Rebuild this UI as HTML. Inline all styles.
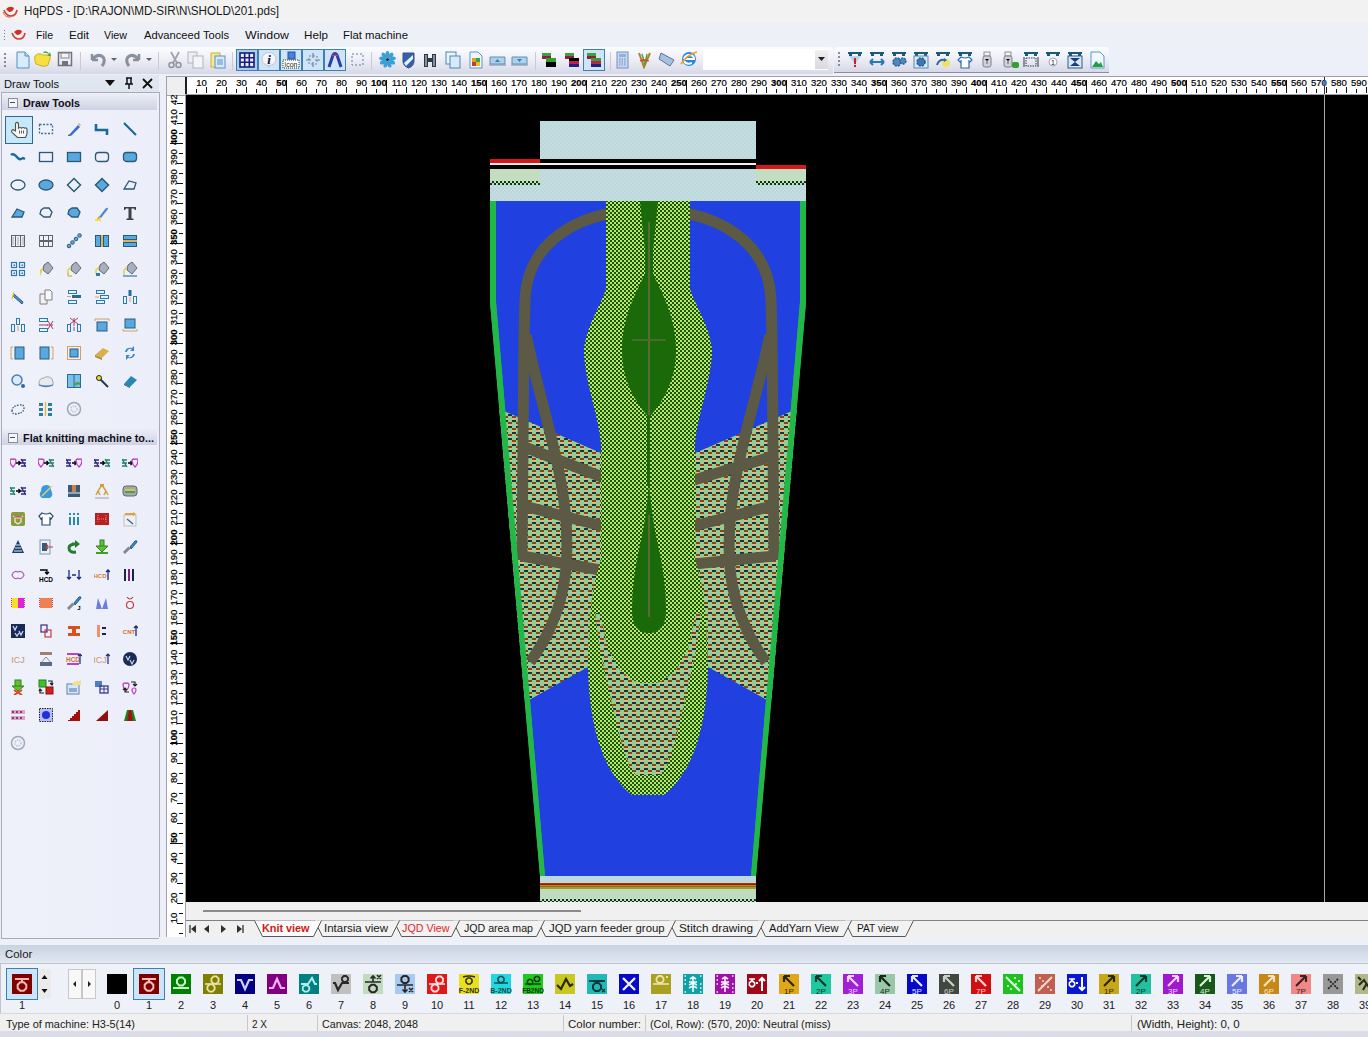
<!DOCTYPE html>
<html><head><meta charset="utf-8"><title>HqPDS</title>
<style>
html,body{margin:0;padding:0;}
body{width:1368px;height:1037px;overflow:hidden;position:relative;background:#eceef8;font-family:"Liberation Sans", sans-serif;}
</style></head><body>
<div style="position:absolute;left:0px;top:0px;width:1368px;height:22px;background:#f2f2f3;"></div>
<svg style="position:absolute;left:2px;top:4px" width="17" height="14" viewBox="0 0 17 14">
<path d="M2 6 Q4 12 9 12 Q14 12 15 6" fill="none" stroke="#d04030" stroke-width="1.6"/>
<path d="M4 5 Q8 1 12 4 Q11 8 7 8 Z" fill="#d03020"/>
<path d="M1 8 Q3 14 9 13" fill="none" stroke="#e06050" stroke-width="1"/></svg>
<div style="position:absolute;left:24px;top:5.14px;font-size:12px;line-height:13.404px;color:#1a1a1a;white-space:nowrap;transform:scaleX(0.9730);transform-origin:0 0;">HqPDS - [D:\RAJON\MD-SIR\N\SHOLD\201.pds]</div>
<div style="position:absolute;left:0px;top:22px;width:1368px;height:24px;background:#eef0f8;"></div>
<div style="position:absolute;left:4px;top:30px;width:1px;height:1px;background:#707080;"></div>
<div style="position:absolute;left:4px;top:33px;width:1px;height:1px;background:#707080;"></div>
<div style="position:absolute;left:4px;top:36px;width:1px;height:1px;background:#707080;"></div>
<div style="position:absolute;left:4px;top:39px;width:1px;height:1px;background:#707080;"></div>
<svg style="position:absolute;left:10px;top:27px" width="17" height="14" viewBox="0 0 17 14">
<path d="M2 6 Q4 12 9 12 Q14 12 15 6" fill="none" stroke="#d04030" stroke-width="1.6"/>
<path d="M4 5 Q8 1 12 4 Q11 8 7 8 Z" fill="#d03020"/></svg>
<div style="position:absolute;left:36px;top:29.05px;font-size:11px;line-height:12.287px;color:#101010;white-space:nowrap;transform:scaleX(0.9591);transform-origin:0 0;">File</div>
<div style="position:absolute;left:69px;top:29.05px;font-size:11px;line-height:12.287px;color:#101010;white-space:nowrap;transform:scaleX(1.0551);transform-origin:0 0;">Edit</div>
<div style="position:absolute;left:104px;top:29.05px;font-size:11px;line-height:12.287px;color:#101010;white-space:nowrap;transform:scaleX(0.9727);transform-origin:0 0;">View</div>
<div style="position:absolute;left:144px;top:29.05px;font-size:11px;line-height:12.287px;color:#101010;white-space:nowrap;transform:scaleX(1.0170);transform-origin:0 0;">Advanceed Tools</div>
<div style="position:absolute;left:245px;top:29.05px;font-size:11px;line-height:12.287px;color:#101010;white-space:nowrap;transform:scaleX(1.1246);transform-origin:0 0;">Window</div>
<div style="position:absolute;left:304px;top:29.05px;font-size:11px;line-height:12.287px;color:#101010;white-space:nowrap;transform:scaleX(1.0608);transform-origin:0 0;">Help</div>
<div style="position:absolute;left:343px;top:29.05px;font-size:11px;line-height:12.287px;color:#101010;white-space:nowrap;transform:scaleX(1.0322);transform-origin:0 0;">Flat machine</div>
<div style="position:absolute;left:0px;top:46px;width:1368px;height:30px;background:#eef0f9;"></div>
<div style="position:absolute;left:0px;top:47px;width:833px;height:27px;background:linear-gradient(#fbfcfe 0%,#f0f1f8 40%,#d6d8e6 100%);border-radius:0 3px 0 0;"></div>
<div style="position:absolute;left:0px;top:74px;width:833px;height:1px;background:#9a9cae;"></div>
<div style="position:absolute;left:834px;top:47px;width:275px;height:25px;background:linear-gradient(#fbfcfe 0%,#f0f1f8 40%,#d6d8e6 100%);border-radius:3px 3px 0 0;"></div>
<div style="position:absolute;left:834px;top:72px;width:275px;height:1px;background:#8a8c9e;"></div>
<div style="position:absolute;left:4px;top:53px;width:2px;height:2px;background:#8a8a98;"></div>
<div style="position:absolute;left:4px;top:57px;width:2px;height:2px;background:#8a8a98;"></div>
<div style="position:absolute;left:4px;top:61px;width:2px;height:2px;background:#8a8a98;"></div>
<div style="position:absolute;left:4px;top:65px;width:2px;height:2px;background:#8a8a98;"></div>
<div style="position:absolute;left:838px;top:52px;width:2px;height:2px;background:#8a8a98;"></div>
<div style="position:absolute;left:838px;top:56px;width:2px;height:2px;background:#8a8a98;"></div>
<div style="position:absolute;left:838px;top:60px;width:2px;height:2px;background:#8a8a98;"></div>
<div style="position:absolute;left:838px;top:64px;width:2px;height:2px;background:#8a8a98;"></div>
<svg style="position:absolute;left:15px;top:51px" width="16" height="18" viewBox="0 0 16 18"><path d="M2 1 H10 L14 5 V17 H2 Z" fill="#d8ecfb" stroke="#4f8fc8" stroke-width="1"/><path d="M10 1 V5 H14" fill="#b8d8f0" stroke="#4f8fc8"/></svg>
<svg style="position:absolute;left:34px;top:50px" width="18" height="18" viewBox="0 0 18 18"><path d="M1 6 Q3 3 7 4 L9 5 H15 Q17 6 16 9 L14 15 Q12 17 8 16 L2 14 Q0 10 1 6Z" fill="#f5e040" stroke="#c8b020"/><path d="M9 2 Q13 0 15 4 L16 2 L17 6 L13 6 L15 5 Q13 2 10 3Z" fill="#40a030"/></svg>
<svg style="position:absolute;left:57px;top:51px" width="16" height="16" viewBox="0 0 16 16"><rect x="1.5" y="1.5" width="13" height="13" fill="none" stroke="#707478" stroke-width="1.5"/><rect x="4" y="2" width="8" height="5" fill="none" stroke="#808488"/><rect x="5" y="10" width="6" height="4" fill="#707478"/></svg>
<div style="position:absolute;left:80px;top:52px;width:1px;height:18px;background:#c8cad6;"></div>
<svg style="position:absolute;left:89px;top:51px" width="18" height="18" viewBox="0 0 18 18"><path d="M3 9 L3 3 M3 9 L9 9" stroke="#8890a0" stroke-width="2.5" fill="none"/><path d="M4 8 Q9 2 14 6 Q17 10 13 15" stroke="#8890a0" stroke-width="3" fill="none"/></svg>
<svg style="position:absolute;left:111px;top:58px" width="6" height="4" viewBox="0 0 6 4"><path d="M0 0 H6 L3 3Z" fill="#606070"/></svg>
<svg style="position:absolute;left:124px;top:51px" width="18" height="18" viewBox="0 0 18 18"><path d="M15 9 L15 3 M15 9 L9 9" stroke="#8890a0" stroke-width="2.5" fill="none"/><path d="M14 8 Q9 2 4 6 Q1 10 5 15" stroke="#8890a0" stroke-width="3" fill="none"/></svg>
<svg style="position:absolute;left:146px;top:58px" width="6" height="4" viewBox="0 0 6 4"><path d="M0 0 H6 L3 3Z" fill="#606070"/></svg>
<div style="position:absolute;left:158px;top:52px;width:1px;height:18px;background:#c8cad6;"></div>
<svg style="position:absolute;left:167px;top:51px" width="16" height="18" viewBox="0 0 16 18"><path d="M4 1 L10 12 M12 1 L6 12" stroke="#a0a4b0" stroke-width="1.8"/><circle cx="4.5" cy="14" r="2.5" fill="none" stroke="#90949f" stroke-width="1.5"/><circle cx="11.5" cy="14" r="2.5" fill="none" stroke="#90949f" stroke-width="1.5"/></svg>
<svg style="position:absolute;left:187px;top:51px" width="17" height="18" viewBox="0 0 17 18"><rect x="1" y="1" width="9" height="11" fill="#eceef2" stroke="#b0b4bc"/><rect x="6" y="5" width="10" height="12" fill="#f4f5f8" stroke="#b0b4bc"/></svg>
<svg style="position:absolute;left:210px;top:51px" width="16" height="18" viewBox="0 0 16 18"><rect x="1" y="2" width="9" height="14" fill="#f8e890" stroke="#c8b050"/><rect x="5" y="5" width="10" height="12" fill="#d8eafa" stroke="#5890c8"/><path d="M7 9H13M7 11H13M7 13H13" stroke="#5890c8"/></svg>
<div style="position:absolute;left:232px;top:52px;width:1px;height:18px;background:#c8cad6;"></div>
<div style="position:absolute;left:236px;top:49px;width:20px;height:20px;background:#a9cdea;border:1px solid #3d80b2;"></div>
<svg style="position:absolute;left:239px;top:52px" width="16" height="16" viewBox="0 0 16 16"><rect x="1" y="1" width="14" height="14" fill="#e8eef8" stroke="#1a1a80" stroke-width="1.6"/><path d="M5.7 1V15M10.3 1V15M1 5.7H15M1 10.3H15" stroke="#1a1a80" stroke-width="1.6"/></svg>
<div style="position:absolute;left:258px;top:49px;width:20px;height:20px;background:#cfe4f6;border:1px solid #3d80b2;"></div>
<div style="position:absolute;left:280px;top:49px;width:20px;height:20px;background:#cfe4f6;border:1px solid #3d80b2;"></div>
<div style="position:absolute;left:302px;top:49px;width:20px;height:20px;background:#cfe4f6;border:1px solid #3d80b2;"></div>
<div style="position:absolute;left:324px;top:49px;width:20px;height:20px;background:#cfe4f6;border:1px solid #3d80b2;"></div>
<svg style="position:absolute;left:261px;top:51px" width="16" height="18" viewBox="0 0 16 18"><ellipse cx="8" cy="8" rx="7" ry="6.5" fill="#f4f6fa" stroke="#c0c8d8"/><text x="8" y="13" font-family="Liberation Serif" font-size="13" font-weight="bold" font-style="italic" text-anchor="middle" fill="#101040">i</text><path d="M6 14 L8 17 L9 14" fill="#c0c8d8"/></svg>
<svg style="position:absolute;left:282px;top:51px" width="18" height="18" viewBox="0 0 18 18"><rect x="6" y="1" width="7" height="7" fill="#4a80e0" stroke="#2050a0"/><rect x="1" y="9" width="16" height="8" fill="#fff" stroke="#303030" stroke-dasharray="1 1"/><text x="9" y="16" font-family="Liberation Sans" font-size="7" text-anchor="middle" fill="#202020">icon</text></svg>
<svg style="position:absolute;left:305px;top:52px" width="16" height="16" viewBox="0 0 16 16"><path d="M8 1V6M8 10V15M1 8H6M10 8H15" stroke="#7080a0" stroke-width="1.2"/><rect x="4" y="4" width="8" height="8" fill="none" stroke="#7080a0" stroke-dasharray="2 2"/></svg>
<svg style="position:absolute;left:327px;top:51px" width="16" height="18" viewBox="0 0 16 18"><path d="M2 16 L6 4 Q8 1 10 4 L14 16" stroke="#2a3ea8" stroke-width="3" fill="none"/><path d="M5 5 Q8 3 11 5" stroke="#b04080" stroke-width="1.5" fill="none"/></svg>
<svg style="position:absolute;left:351px;top:53px" width="13" height="13" viewBox="0 0 13 13"><rect x="1" y="1" width="11" height="11" fill="none" stroke="#6080a0" stroke-dasharray="2 2"/></svg>
<div style="position:absolute;left:371px;top:52px;width:1px;height:18px;background:#c8cad6;"></div>
<svg style="position:absolute;left:379px;top:51px" width="17" height="17" viewBox="0 0 17 17"><ellipse cx="8.5" cy="3.5" rx="2" ry="3.5" fill="#3aa0d8" transform="rotate(0 8.5 8.5)"/><ellipse cx="8.5" cy="3.5" rx="2" ry="3.5" fill="#3aa0d8" transform="rotate(40 8.5 8.5)"/><ellipse cx="8.5" cy="3.5" rx="2" ry="3.5" fill="#3aa0d8" transform="rotate(80 8.5 8.5)"/><ellipse cx="8.5" cy="3.5" rx="2" ry="3.5" fill="#3aa0d8" transform="rotate(120 8.5 8.5)"/><ellipse cx="8.5" cy="3.5" rx="2" ry="3.5" fill="#3aa0d8" transform="rotate(160 8.5 8.5)"/><ellipse cx="8.5" cy="3.5" rx="2" ry="3.5" fill="#3aa0d8" transform="rotate(200 8.5 8.5)"/><ellipse cx="8.5" cy="3.5" rx="2" ry="3.5" fill="#3aa0d8" transform="rotate(240 8.5 8.5)"/><ellipse cx="8.5" cy="3.5" rx="2" ry="3.5" fill="#3aa0d8" transform="rotate(280 8.5 8.5)"/><ellipse cx="8.5" cy="3.5" rx="2" ry="3.5" fill="#3aa0d8" transform="rotate(320 8.5 8.5)"/><circle cx="8.5" cy="8.5" r="1.6" fill="#203040"/></svg>
<svg style="position:absolute;left:401px;top:51px" width="15" height="18" viewBox="0 0 15 18"><path d="M2 2 H13 V10 Q13 15 7.5 17 Q2 15 2 10Z" fill="#3060b0" stroke="#405070"/><path d="M3 12 L12 4 V8 L5 15Z" fill="#e8f0f8"/></svg>
<svg style="position:absolute;left:423px;top:52px" width="14" height="16" viewBox="0 0 14 16"><path d="M1 2H5V6H9V2H13V15H9V10H5V15H1Z" fill="#303840"/><rect x="2" y="3" width="2" height="11" fill="#8090a0"/><rect x="10" y="3" width="2" height="11" fill="#8090a0"/></svg>
<svg style="position:absolute;left:445px;top:51px" width="16" height="18" viewBox="0 0 16 18"><rect x="1" y="1" width="10" height="12" fill="#eaf4fb" stroke="#4a88b8"/><rect x="5" y="5" width="10" height="12" fill="#d8eaf8" stroke="#4a88b8"/></svg>
<svg style="position:absolute;left:468px;top:51px" width="16" height="18" viewBox="0 0 16 18"><path d="M2 1H10L14 5V17H2Z" fill="#eef6fc" stroke="#5a98c8"/><rect x="4" y="7" width="4" height="4" fill="#e0a020"/><rect x="8" y="7" width="4" height="4" fill="#40a040"/><rect x="4" y="11" width="4" height="4" fill="#c04030"/><rect x="8" y="11" width="4" height="4" fill="#e0c030"/></svg>
<svg style="position:absolute;left:489px;top:53px" width="17" height="14" viewBox="0 0 17 14"><path d="M1 4 H16 V11 H1Z" fill="#b0d0e8" stroke="#5a90b8"/><path d="M0 12H17" stroke="#7090a8"/><path d="M8.5 6 L6 9 H11Z" fill="#3080c0"/></svg>
<svg style="position:absolute;left:511px;top:53px" width="17" height="14" viewBox="0 0 17 14"><path d="M1 4 H16 V11 H1Z" fill="#b0d0e8" stroke="#5a90b8"/><path d="M0 12H17" stroke="#7090a8"/><path d="M8.5 9 L6 6 H11Z" fill="#3080c0"/></svg>
<div style="position:absolute;left:535px;top:52px;width:1px;height:18px;background:#c8cad6;"></div>
<svg style="position:absolute;left:541px;top:52px" width="16" height="16" viewBox="0 0 16 16"><rect x="1" y="1" width="9" height="3" fill="#40a040"/><rect x="1" y="4" width="9" height="3" fill="#8a2040"/><rect x="5" y="6" width="10" height="4" fill="#30a030"/><rect x="5" y="10" width="10" height="5" fill="#000"/></svg>
<svg style="position:absolute;left:564px;top:52px" width="16" height="16" viewBox="0 0 16 16"><rect x="1" y="1" width="9" height="3" fill="#40a040"/><rect x="1" y="4" width="9" height="3" fill="#8a2040"/><rect x="5" y="6" width="10" height="3" fill="#000"/><rect x="5" y="9" width="10" height="3" fill="#c02050"/><rect x="5" y="12" width="10" height="3" fill="#202080"/></svg>
<div style="position:absolute;left:583px;top:49px;width:20px;height:20px;background:#cfe4f6;border:1px solid #3d80b2;"></div>
<svg style="position:absolute;left:586px;top:52px" width="16" height="16" viewBox="0 0 16 16"><rect x="1" y="1" width="9" height="3" fill="#40a040"/><rect x="1" y="4" width="9" height="3" fill="#8a2040"/><rect x="5" y="6" width="10" height="3" fill="#30a030"/><rect x="5" y="9" width="10" height="3" fill="#c02050"/><rect x="5" y="12" width="10" height="3" fill="#202080"/></svg>
<div style="position:absolute;left:610px;top:52px;width:1px;height:18px;background:#c8cad6;"></div>
<svg style="position:absolute;left:616px;top:51px" width="13" height="18" viewBox="0 0 13 18"><rect x="1" y="1" width="11" height="16" fill="#c8d8f0" stroke="#7090c0"/><rect x="3" y="3" width="7" height="3" fill="#90b0e0"/><path d="M3 8H10M3 10H10M3 12H10M3 14H10" stroke="#7090c0" stroke-dasharray="1.5 1"/></svg>
<svg style="position:absolute;left:637px;top:51px" width="15" height="18" viewBox="0 0 15 18"><path d="M2 2 L7 16 L13 2" stroke="#b08030" stroke-width="2" fill="none"/><path d="M5 3 L8 14 L10 3" stroke="#60a040" stroke-width="1.5" fill="none"/><path d="M3 10 Q7 8 12 10" stroke="#d04040" stroke-width="1.3" fill="none"/></svg>
<svg style="position:absolute;left:658px;top:52px" width="17" height="15" viewBox="0 0 17 15"><path d="M3 1 L16 8 L12 14 L1 7Z" fill="#a8c0dc" stroke="#5878a0"/></svg>
<svg style="position:absolute;left:680px;top:50px" width="18" height="18" viewBox="0 0 18 18"><circle cx="9" cy="9" r="7" fill="#2a88d8"/><path d="M4 9H14 Q14 5 9 5 Q5 5 4 9M4 11 Q6 15 12 13" stroke="#fff" stroke-width="2" fill="none"/><path d="M1 14 Q8 4 17 2" stroke="#f0a020" stroke-width="1.6" fill="none"/></svg>
<div style="position:absolute;left:703px;top:49px;width:125px;height:21px;background:#fff;"></div>
<div style="position:absolute;left:815px;top:50px;width:13px;height:19px;background:linear-gradient(#f0f0f0,#d8d8de);"></div>
<svg style="position:absolute;left:818px;top:57px" width="7" height="4" viewBox="0 0 7 4"><path d="M0 0H7L3.5 4Z" fill="#202020"/></svg>
<svg style="position:absolute;left:847px;top:51px" width="16" height="18" viewBox="0 0 16 18"><path d="M1 2H15" stroke="#1a5a78" stroke-width="2"/><rect x="2" y="2" width="3" height="3" fill="#1a5a78"/><rect x="11" y="2" width="3" height="3" fill="#1a5a78"/><path d="M2 5 L14 5 L9 12 V16 H7 V12Z" fill="#bcd4e8"/><rect x="7" y="7" width="2" height="6" fill="#d02020"/><rect x="7" y="14" width="2" height="2" fill="#d02020"/></svg>
<svg style="position:absolute;left:869px;top:51px" width="16" height="18" viewBox="0 0 16 18"><path d="M1 2H15" stroke="#1a5a78" stroke-width="2"/><rect x="2" y="2" width="3" height="3" fill="#1a5a78"/><rect x="11" y="2" width="3" height="3" fill="#1a5a78"/><path d="M1 11H15M1 11 L4 8M1 11 L4 14M15 11 L12 8M15 11 L12 14" stroke="#2a78b8" stroke-width="2" fill="none"/></svg>
<svg style="position:absolute;left:891px;top:51px" width="17" height="18" viewBox="0 0 17 18"><path d="M1 2H15" stroke="#1a5a78" stroke-width="2"/><rect x="2" y="2" width="3" height="3" fill="#1a5a78"/><rect x="11" y="2" width="3" height="3" fill="#1a5a78"/><circle cx="6" cy="11" r="4" fill="#4a88c0" stroke="#2a5a90" stroke-dasharray="2 1.2" stroke-width="1.5"/><circle cx="12" cy="10" r="3" fill="#4a88c0" stroke="#2a5a90" stroke-dasharray="2 1" stroke-width="1.3"/></svg>
<svg style="position:absolute;left:913px;top:51px" width="16" height="18" viewBox="0 0 16 18"><path d="M1 2H15" stroke="#1a5a78" stroke-width="2"/><rect x="2" y="2" width="3" height="3" fill="#1a5a78"/><rect x="11" y="2" width="3" height="3" fill="#1a5a78"/><rect x="1" y="5" width="14" height="12" fill="#d8e8f4" stroke="#5a88b0"/><circle cx="8" cy="11" r="4" fill="#3a78b8" stroke="#2a5890" stroke-dasharray="2 1.2" stroke-width="1.5"/></svg>
<svg style="position:absolute;left:935px;top:51px" width="16" height="18" viewBox="0 0 16 18"><path d="M1 2H15" stroke="#1a5a78" stroke-width="2"/><rect x="2" y="2" width="3" height="3" fill="#1a5a78"/><rect x="11" y="2" width="3" height="3" fill="#1a5a78"/><circle cx="11" cy="12" r="4" fill="#f0e060"/><path d="M2 14 Q4 8 10 9" stroke="#2a6aa8" stroke-width="2" fill="none"/><path d="M9 7 L12 9 L9 11Z" fill="#2a6aa8"/></svg>
<svg style="position:absolute;left:957px;top:51px" width="16" height="18" viewBox="0 0 16 18"><path d="M1 2H15" stroke="#1a5a78" stroke-width="2"/><rect x="2" y="2" width="3" height="3" fill="#1a5a78"/><rect x="11" y="2" width="3" height="3" fill="#1a5a78"/><path d="M4 6 L1 9 L3 11 L4 10 V17 H12 V10 L13 11 L15 9 L12 6 Q8 8 4 6Z" fill="#fff" stroke="#2a6aa8" stroke-width="1.2"/></svg>
<svg style="position:absolute;left:982px;top:51px" width="10" height="18" viewBox="0 0 10 18"><rect x="2" y="1" width="6" height="4" fill="none" stroke="#909090"/><rect x="1" y="5" width="8" height="11" rx="2" fill="#d0d0d8" stroke="#808088"/><path d="M3 8 L5 10 L7 8M5 10V13" stroke="#606068"/></svg>
<svg style="position:absolute;left:1003px;top:51px" width="17" height="18" viewBox="0 0 17 18"><rect x="2" y="1" width="6" height="4" fill="none" stroke="#909090"/><rect x="1" y="5" width="8" height="11" rx="2" fill="#d0d0d8" stroke="#808088"/><path d="M3 8 L5 10 L7 8M5 10V13" stroke="#606068"/><rect x="9" y="11" width="7" height="6" rx="2" fill="#30a030"/></svg>
<svg style="position:absolute;left:1023px;top:51px" width="16" height="18" viewBox="0 0 16 18"><path d="M1 2H15" stroke="#1a5a78" stroke-width="2"/><rect x="2" y="2" width="3" height="3" fill="#1a5a78"/><rect x="11" y="2" width="3" height="3" fill="#1a5a78"/><rect x="3" y="7" width="10" height="8" fill="none" stroke="#303848" stroke-dasharray="1.5 1"/><path d="M1 6V16M15 6V16" stroke="#303848"/></svg>
<svg style="position:absolute;left:1045px;top:51px" width="16" height="18" viewBox="0 0 16 18"><path d="M1 2H15" stroke="#1a5a78" stroke-width="2"/><rect x="2" y="2" width="3" height="3" fill="#1a5a78"/><rect x="11" y="2" width="3" height="3" fill="#1a5a78"/><circle cx="8" cy="11" r="4" fill="#fff" stroke="#a0a8b0"/><text x="8" y="14" font-size="7" text-anchor="middle" fill="#202020" font-family="Liberation Sans">1</text></svg>
<svg style="position:absolute;left:1067px;top:51px" width="16" height="18" viewBox="0 0 16 18"><path d="M1 2H15" stroke="#1a5a78" stroke-width="2"/><rect x="2" y="2" width="3" height="3" fill="#1a5a78"/><rect x="11" y="2" width="3" height="3" fill="#1a5a78"/><rect x="1" y="5" width="14" height="12" fill="#d8e8f4" stroke="#2a5a88"/><path d="M3 7H13L8 11L13 15H3L8 11Z" fill="#1a3a78"/></svg>
<svg style="position:absolute;left:1090px;top:51px" width="15" height="18" viewBox="0 0 15 18"><path d="M1 1H10L14 5V17H1Z" fill="#f0f8fc" stroke="#5a98c8"/><path d="M2 16 L6 10 L9 13 L11 11 L13 16Z" fill="#20a040"/></svg>
<div style="position:absolute;left:0px;top:74px;width:166px;height:864px;background:#eceef8;"></div>
<div style="position:absolute;left:0px;top:75px;width:159px;height:17px;background:linear-gradient(#e2e8f2,#dfe5ef);"></div>
<div style="position:absolute;left:4px;top:78.05px;font-size:11px;line-height:12.287px;color:#101010;white-space:nowrap;transform:scaleX(1.0146);transform-origin:0 0;">Draw Tools</div>
<svg style="position:absolute;left:105px;top:80px" width="10" height="7" viewBox="0 0 10 7"><path d="M0 0H10L5 6Z" fill="#101010"/></svg>
<svg style="position:absolute;left:124px;top:77px" width="10" height="12" viewBox="0 0 10 12"><path d="M2 1H8M3 1V7M7 1V7M1 7H9M5 7V12" stroke="#101010" stroke-width="1.5" fill="none"/></svg>
<svg style="position:absolute;left:142px;top:78px" width="11" height="11" viewBox="0 0 11 11"><path d="M1 1L10 10M10 1L1 10" stroke="#101010" stroke-width="1.8"/></svg>
<div style="position:absolute;left:1px;top:92px;width:157px;height:845px;background:linear-gradient(90deg,#eef0fa,#eceff9);border:1px solid #a8aab8;"></div>
<div style="position:absolute;left:2px;top:94px;width:155px;height:16px;background:linear-gradient(#ecedf6,#cfd2e4);"></div>
<div style="position:absolute;left:8px;top:98px;width:8px;height:8px;background:#f6f6fa;border:1px solid #8a8ca0;"></div>
<div style="position:absolute;left:10px;top:102px;width:5px;height:1px;background:#505060;"></div>
<div style="position:absolute;left:23px;top:96.64px;font-size:11px;line-height:12.287px;color:#101018;font-weight:bold;white-space:nowrap;transform:scaleX(0.9749);transform-origin:0 0;">Draw Tools</div>
<div style="position:absolute;left:2px;top:429px;width:155px;height:16px;background:linear-gradient(#ecedf6,#cfd2e4);"></div>
<div style="position:absolute;left:8px;top:433px;width:8px;height:8px;background:#f6f6fa;border:1px solid #8a8ca0;"></div>
<div style="position:absolute;left:10px;top:437px;width:5px;height:1px;background:#505060;"></div>
<div style="position:absolute;left:23px;top:431.65px;font-size:11px;line-height:12.287px;color:#101018;font-weight:bold;white-space:nowrap;transform:scaleX(0.9878);transform-origin:0 0;">Flat knitting machine to...</div>
<div style="position:absolute;left:5px;top:116px;width:28px;height:28px;background:#c6e8fa;border:1.5px solid #2f6a8a;box-sizing:border-box;"></div>
<svg style="position:absolute;left:10px;top:121px" width="16" height="16" viewBox="0 0 16 16"></svg>
<svg style="position:absolute;left:38px;top:121px" width="16" height="16" viewBox="0 0 16 16"><rect x="1.5" y="3.5" width="13" height="9" fill="none" stroke="#3a7090" stroke-dasharray="2 1.5" stroke-width="1.3"/></svg>
<svg style="position:absolute;left:66px;top:121px" width="16" height="16" viewBox="0 0 16 16"><path d="M3 14 L12 4 L14 6 L5 15Z" fill="#3a6ad0"/><path d="M12 3 L13 2 L15 4 L14 5Z" fill="#e8b040"/><path d="M2 15 L3 13 L4 15Z" fill="#404040"/></svg>
<svg style="position:absolute;left:94px;top:121px" width="16" height="16" viewBox="0 0 16 16"><path d="M2 3 V9 H13 V14" stroke="#1a6a98" stroke-width="2.6" fill="none"/></svg>
<svg style="position:absolute;left:122px;top:121px" width="16" height="16" viewBox="0 0 16 16"><path d="M2 2 L14 14" stroke="#1a6a98" stroke-width="2.2"/></svg>
<svg style="position:absolute;left:10px;top:149px" width="16" height="16" viewBox="0 0 16 16"><path d="M1 6 Q3 4 6 7 Q9 11 11 10 L13 9 L15 10" stroke="#1a6a98" stroke-width="2.4" fill="none"/></svg>
<svg style="position:absolute;left:38px;top:149px" width="16" height="16" viewBox="0 0 16 16"><rect x="1.5" y="3.5" width="13" height="9" fill="none" stroke="#2a5a78" stroke-width="1.3"/></svg>
<svg style="position:absolute;left:66px;top:149px" width="16" height="16" viewBox="0 0 16 16"><rect x="1.5" y="3.5" width="13" height="9" fill="#5aa8e0" stroke="#2a5a78" stroke-width="1.3"/></svg>
<svg style="position:absolute;left:94px;top:149px" width="16" height="16" viewBox="0 0 16 16"><rect x="1.5" y="3.5" width="13" height="9" rx="3" fill="none" stroke="#2a5a78" stroke-width="1.3"/></svg>
<svg style="position:absolute;left:122px;top:149px" width="16" height="16" viewBox="0 0 16 16"><rect x="1.5" y="3.5" width="13" height="9" rx="3" fill="#5aa8e0" stroke="#2a5a78" stroke-width="1.3"/></svg>
<svg style="position:absolute;left:10px;top:177px" width="16" height="16" viewBox="0 0 16 16"><ellipse cx="8" cy="8" rx="7" ry="5" fill="none" stroke="#2a5a78" stroke-width="1.3"/></svg>
<svg style="position:absolute;left:38px;top:177px" width="16" height="16" viewBox="0 0 16 16"><ellipse cx="8" cy="8" rx="7" ry="5" fill="#5aa8e0" stroke="#2a5a78" stroke-width="1.3"/></svg>
<svg style="position:absolute;left:66px;top:177px" width="16" height="16" viewBox="0 0 16 16"><path d="M8 1.5 L14.5 8 L8 14.5 L1.5 8Z" fill="none" stroke="#2a5a78" stroke-width="1.5"/></svg>
<svg style="position:absolute;left:94px;top:177px" width="16" height="16" viewBox="0 0 16 16"><path d="M8 1.5 L14.5 8 L8 14.5 L1.5 8Z" fill="#5aa8e0" stroke="#2a5a78" stroke-width="1.5"/></svg>
<svg style="position:absolute;left:122px;top:177px" width="16" height="16" viewBox="0 0 16 16"><path d="M2 12 L7 4 L14 6 L12 12Z" fill="none" stroke="#2a5a78" stroke-width="1.3"/></svg>
<svg style="position:absolute;left:10px;top:205px" width="16" height="16" viewBox="0 0 16 16"><path d="M2 12 L7 4 L14 7 L12 12Z" fill="#5aa8e0" stroke="#2a5a78" stroke-width="1.3"/></svg>
<svg style="position:absolute;left:38px;top:205px" width="16" height="16" viewBox="0 0 16 16"><path d="M3 5 L6 3 H11 L14 7 L12 12 H6 L2 9Z" fill="none" stroke="#2a5a78" stroke-width="1.3"/></svg>
<svg style="position:absolute;left:66px;top:205px" width="16" height="16" viewBox="0 0 16 16"><path d="M3 5 L6 3 H11 L14 7 L12 12 H6 L2 9Z" fill="#5aa8e0" stroke="#2a5a78" stroke-width="1.3"/></svg>
<svg style="position:absolute;left:94px;top:205px" width="16" height="16" viewBox="0 0 16 16"><path d="M5 12 L12 3 Q14 2 14 4 L7 13Z" fill="#4a88d0"/><path d="M2 15 L5 11 L7 13Z" fill="#e8a040"/><rect x="1" y="14" width="6" height="2" fill="#f0e040"/></svg>
<svg style="position:absolute;left:122px;top:205px" width="16" height="16" viewBox="0 0 16 16"><path d="M2 2H14V5H13L12 3.5H9.5V13.5H11.5V15H4.5V13.5H6.5V3.5H4L3 5H2Z" fill="#404048"/></svg>
<svg style="position:absolute;left:10px;top:233px" width="16" height="16" viewBox="0 0 16 16"><rect x="1.5" y="2.5" width="13" height="11" fill="none" stroke="#606468"/><path d="M5.5 3V13M10.5 3V13" stroke="#606468"/><path d="M3 4V12M8 4V12M13 4V12" stroke="#a0a4a8"/></svg>
<svg style="position:absolute;left:38px;top:233px" width="16" height="16" viewBox="0 0 16 16"><rect x="1.5" y="2.5" width="13" height="5" fill="none" stroke="#606468"/><rect x="1.5" y="8.5" width="13" height="5" fill="none" stroke="#606468"/><path d="M5.5 3V13M10.5 3V13" stroke="#606468"/></svg>
<svg style="position:absolute;left:66px;top:233px" width="16" height="16" viewBox="0 0 16 16"><circle cx="3" cy="13" r="1.8" fill="#5aa8e0" stroke="#2a5a78"/><circle cx="6.5" cy="9.5" r="1.8" fill="#5aa8e0" stroke="#2a5a78"/><circle cx="10" cy="6" r="1.8" fill="#5aa8e0" stroke="#2a5a78"/><circle cx="13.5" cy="2.5" r="1.8" fill="#5aa8e0" stroke="#2a5a78"/></svg>
<svg style="position:absolute;left:94px;top:233px" width="16" height="16" viewBox="0 0 16 16"><rect x="1.5" y="2.5" width="5" height="11" fill="#5aa8e0" stroke="#2a5a78"/><rect x="9.5" y="2.5" width="5" height="11" fill="#5aa8e0" stroke="#2a5a78"/><path d="M8 2V14" stroke="#d0a030" stroke-width="1.5"/></svg>
<svg style="position:absolute;left:122px;top:233px" width="16" height="16" viewBox="0 0 16 16"><rect x="1.5" y="2.5" width="13" height="4" fill="#5aa8e0" stroke="#2a5a78"/><rect x="1.5" y="9.5" width="13" height="4" fill="#5aa8e0" stroke="#2a5a78"/><path d="M1 8H15" stroke="#d0a030" stroke-width="1.5"/></svg>
<svg style="position:absolute;left:10px;top:261px" width="16" height="16" viewBox="0 0 16 16"><rect x="1.5" y="1.5" width="5" height="5" fill="none" stroke="#2a7ab0" stroke-width="1.2"/><rect x="9.5" y="1.5" width="5" height="5" fill="none" stroke="#2a7ab0" stroke-width="1.2"/><rect x="1.5" y="9.5" width="5" height="5" fill="none" stroke="#2a7ab0" stroke-width="1.2"/><rect x="9.5" y="9.5" width="5" height="5" fill="none" stroke="#2a7ab0" stroke-width="1.2"/><rect x="3.5" y="3.5" width="1.5" height="1.5" fill="#2a7ab0"/><rect x="11.5" y="3.5" width="1.5" height="1.5" fill="#2a7ab0"/><rect x="3.5" y="11.5" width="1.5" height="1.5" fill="#2a7ab0"/><rect x="11.5" y="11.5" width="1.5" height="1.5" fill="#2a7ab0"/></svg>
<svg style="position:absolute;left:38px;top:261px" width="16" height="16" viewBox="0 0 16 16"><path d="M6 4 L10 1 L15 7 L10 13 L5 9Z" fill="#a8b0c0" stroke="#606878"/><path d="M5 6 L2 9 V15 L4 11Z" fill="#e8d040"/></svg>
<svg style="position:absolute;left:66px;top:261px" width="16" height="16" viewBox="0 0 16 16"><path d="M6 4 L10 1 L15 7 L10 13 L5 9Z" fill="#a8b0c0" stroke="#606878"/><path d="M5 6 L2 9 V13" fill="none" stroke="#e8d040" stroke-width="1.5"/><path d="M2 12V15H6" stroke="#d0a030" fill="none"/></svg>
<svg style="position:absolute;left:94px;top:261px" width="16" height="16" viewBox="0 0 16 16"><path d="M6 4 L10 1 L15 7 L10 13 L5 9Z" fill="#a8b0c0" stroke="#606878"/><path d="M5 6 L2 9 V13" fill="none" stroke="#e8d040" stroke-width="1.5"/><rect x="2" y="12" width="4" height="3" fill="#2a7ab0"/></svg>
<svg style="position:absolute;left:122px;top:261px" width="16" height="16" viewBox="0 0 16 16"><path d="M6 4 L10 1 L15 7 L10 13 L5 9Z" fill="#a8b0c0" stroke="#606878"/><path d="M5 6 L2 9 V14" fill="none" stroke="#e8d040" stroke-width="1.5"/><path d="M1 15H15" stroke="#2a7ab0" stroke-width="1.2"/></svg>
<svg style="position:absolute;left:10px;top:289px" width="16" height="16" viewBox="0 0 16 16"><path d="M4 5 L13 13 L12 15 L3 7Z" fill="#4a90d0" stroke="#2a5a88"/><path d="M4 3 L2 10" stroke="#e8c040" stroke-width="1.3"/></svg>
<svg style="position:absolute;left:38px;top:289px" width="16" height="16" viewBox="0 0 16 16"><path d="M2 5H7L9 7V15H2Z" fill="#f0f0f0" stroke="#808080"/><path d="M7 1H12L14 3V11H7Z" fill="#f8f8f8" stroke="#808080"/></svg>
<svg style="position:absolute;left:66px;top:289px" width="16" height="16" viewBox="0 0 16 16"><rect x="2.5" y="1.5" width="8" height="3" fill="none" stroke="#2a7ab0"/><rect x="6" y="6" width="9" height="3" fill="#2a6a98"/><rect x="2.5" y="11.5" width="8" height="3" fill="none" stroke="#2a7ab0"/><path d="M1 7.5H5" stroke="#e0a060"/></svg>
<svg style="position:absolute;left:94px;top:289px" width="16" height="16" viewBox="0 0 16 16"><rect x="2.5" y="1.5" width="8" height="3" fill="none" stroke="#2a7ab0"/><rect x="6.5" y="6.5" width="8" height="3" fill="none" stroke="#2a7ab0"/><rect x="2.5" y="11.5" width="8" height="3" fill="none" stroke="#2a7ab0"/><path d="M1 8H5" stroke="#e0a060"/></svg>
<svg style="position:absolute;left:122px;top:289px" width="16" height="16" viewBox="0 0 16 16"><rect x="1.5" y="7.5" width="3" height="7" fill="none" stroke="#2a7ab0"/><rect x="6.5" y="1" width="3" height="6" fill="#2a6a98"/><rect x="11.5" y="7.5" width="3" height="7" fill="none" stroke="#2a7ab0"/><path d="M8 8V13" stroke="#e0a060"/></svg>
<svg style="position:absolute;left:10px;top:317px" width="16" height="16" viewBox="0 0 16 16"><rect x="1.5" y="7.5" width="3" height="7" fill="none" stroke="#2a7ab0"/><rect x="6.5" y="1.5" width="3" height="6" fill="none" stroke="#2a7ab0"/><rect x="11.5" y="7.5" width="3" height="7" fill="none" stroke="#2a7ab0"/><path d="M8 9V14" stroke="#e0a060"/></svg>
<svg style="position:absolute;left:38px;top:317px" width="16" height="16" viewBox="0 0 16 16"><rect x="1.5" y="1.5" width="8" height="3" fill="none" stroke="#2a7ab0"/><rect x="1.5" y="11.5" width="8" height="3" fill="none" stroke="#2a7ab0"/><path d="M1 8H10M10 4L15 12M15 4L10 12M9 8H15" stroke="#a04060"/></svg>
<svg style="position:absolute;left:66px;top:317px" width="16" height="16" viewBox="0 0 16 16"><rect x="1.5" y="7.5" width="3" height="7" fill="none" stroke="#2a7ab0"/><rect x="11.5" y="7.5" width="3" height="7" fill="none" stroke="#2a7ab0"/><path d="M8 1V9M4 1L12 7M12 1L4 7M8 10V14" stroke="#a04060"/></svg>
<svg style="position:absolute;left:94px;top:317px" width="16" height="16" viewBox="0 0 16 16"><path d="M1 4V2H15V4" stroke="#d0a060" fill="none"/><rect x="3" y="5" width="10" height="9" fill="#5aa8e0" stroke="#2a5a78"/></svg>
<svg style="position:absolute;left:122px;top:317px" width="16" height="16" viewBox="0 0 16 16"><rect x="3" y="2" width="10" height="9" fill="#5aa8e0" stroke="#2a5a78"/><path d="M1 12V14H15V12" stroke="#d0a060" fill="none"/></svg>
<svg style="position:absolute;left:10px;top:345px" width="16" height="16" viewBox="0 0 16 16"><path d="M3 2H1V14H3" stroke="#d0a060" fill="none"/><rect x="5" y="2" width="9" height="12" fill="#5aa8e0" stroke="#2a5a78"/></svg>
<svg style="position:absolute;left:38px;top:345px" width="16" height="16" viewBox="0 0 16 16"><rect x="2" y="2" width="9" height="12" fill="#5aa8e0" stroke="#2a5a78"/><path d="M13 2H15V14H13" stroke="#d0a060" fill="none"/></svg>
<svg style="position:absolute;left:66px;top:345px" width="16" height="16" viewBox="0 0 16 16"><rect x="1.5" y="1.5" width="13" height="13" fill="none" stroke="#d0a060"/><rect x="4" y="4" width="8" height="8" fill="#5aa8e0" stroke="#2a5a78"/></svg>
<svg style="position:absolute;left:94px;top:345px" width="16" height="16" viewBox="0 0 16 16"><path d="M1 10 L9 3 L15 6 L8 13Z" fill="#d8b050"/><path d="M1 10 L8 13 V15 L1 12Z" fill="#b08a30"/></svg>
<svg style="position:absolute;left:122px;top:345px" width="16" height="16" viewBox="0 0 16 16"><path d="M3 7 Q4 2 10 3 L12 1 V6 H8 L10 4 Q6 3 5 7Z" fill="#3a88c8"/><path d="M13 9 Q12 14 6 13 L4 15 V10 H8 L6 12 Q10 13 11 9Z" fill="#3a88c8"/></svg>
<svg style="position:absolute;left:10px;top:373px" width="16" height="16" viewBox="0 0 16 16"><circle cx="7" cy="7" r="5" fill="#d8ecf8" stroke="#4a80b0" stroke-width="1.5"/><circle cx="13" cy="13" r="2" fill="#2a6ab0"/></svg>
<svg style="position:absolute;left:38px;top:373px" width="16" height="16" viewBox="0 0 16 16"><path d="M1 11 Q1 5 6 5 Q8 3 11 4 Q15 5 15 9 V12 Q10 14 1 12Z" fill="#e8eaee" stroke="#a0a8b0"/><path d="M1 12 Q8 15 15 12" stroke="#4a80b0" stroke-width="1.3" fill="none"/></svg>
<svg style="position:absolute;left:66px;top:373px" width="16" height="16" viewBox="0 0 16 16"><rect x="1.5" y="1.5" width="13" height="13" fill="#7ac0e8" stroke="#2a6a98"/><path d="M8 1V15" stroke="#2a6a98"/><path d="M9 12 Q11 9 14 11" stroke="#50a040" stroke-width="2.5" fill="none"/></svg>
<svg style="position:absolute;left:94px;top:373px" width="16" height="16" viewBox="0 0 16 16"><path d="M6 6 L14 14" stroke="#1a3a60" stroke-width="2"/><circle cx="5" cy="5" r="2.5" fill="#f0e020" stroke="#202020"/></svg>
<svg style="position:absolute;left:122px;top:373px" width="16" height="16" viewBox="0 0 16 16"><path d="M2 11 L9 3 L15 7 L8 14Z" fill="#2a88b0"/><path d="M2 11 L8 14 V15 L2 12Z" fill="#1a5a78"/></svg>
<svg style="position:absolute;left:10px;top:401px" width="16" height="16" viewBox="0 0 16 16"><path d="M2 10 Q2 5 9 4 Q14 3 14 7 Q14 12 6 13 Q2 13 2 10Z" fill="none" stroke="#2a5a78" stroke-dasharray="1.5 1.2" stroke-width="1.3"/></svg>
<svg style="position:absolute;left:38px;top:401px" width="16" height="16" viewBox="0 0 16 16"><rect x="1" y="2" width="4" height="3" fill="#2a7ab0"/><rect x="1" y="7" width="4" height="3" fill="#2a7ab0"/><rect x="1" y="12" width="4" height="3" fill="#2a7ab0"/><rect x="10" y="2" width="4" height="3" fill="#2a7ab0"/><rect x="10" y="7" width="4" height="3" fill="#2a7ab0"/><rect x="10" y="12" width="4" height="3" fill="#2a7ab0"/><path d="M7.5 1V15" stroke="#e0c040" stroke-width="1.5"/></svg>
<svg style="position:absolute;left:66px;top:401px" width="16" height="16" viewBox="0 0 16 16"><circle cx="8" cy="8" r="6.5" fill="none" stroke="#a0a8b4" stroke-width="1.5"/><circle cx="8" cy="8" r="3" fill="none" stroke="#b8c8d8" stroke-width="1.5" stroke-dasharray="1.5 1"/></svg>
<svg style="position:absolute;left:8px;top:120px" width="22" height="20" viewBox="0 0 22 20"><path d="M7.5 10 V3.5 Q9 1.3 10.5 3.5 V8.2 Q12 6.8 13.5 8.2 Q15 6.8 16.5 8.2 Q18.7 7.2 19 9.2 V14 L17.5 17.5 H9.5 L4 12.3 Q2.8 10.3 5.2 9.6 L7.5 11Z" fill="#f6f6f6" stroke="#505050" stroke-width="1.1"/><path d="M11.5 10.5V13.5M13.5 10.5V13.5M15.5 10.5V13.5" stroke="#505050" stroke-width="0.9"/></svg>
<svg style="position:absolute;left:10px;top:455px" width="16" height="16" viewBox="0 0 16 16"><path d="M0 6 Q0 4 2 4 Q3 4 3 5 Q3 4 4 4 Q6 4 6 6 Q6 9 3 12 Q0 9 0 6Z" fill="none" stroke="#c040c0" stroke-width="1.3"/><path d="M6 8H10M8.5 6 L10.5 8 L8.5 10" stroke="#000" stroke-width="1.3" fill="none"/><path d="M11 5 L16 5 M11 8 L16 8 M11 11 L16 11 M11 4 L16 12" stroke="#302880" stroke-width="1.3"/></svg>
<svg style="position:absolute;left:38px;top:455px" width="16" height="16" viewBox="0 0 16 16"><path d="M0 6 Q0 4 2 4 Q3 4 3 5 Q3 4 4 4 Q6 4 6 6 Q6 9 3 12 Q0 9 0 6Z" fill="none" stroke="#c040c0" stroke-width="1.3"/><path d="M6 8H10M8.5 6 L10.5 8 L8.5 10" stroke="#000" stroke-width="1.3" fill="none"/><path d="M11 5 L16 5 M11 8 L16 8 M11 11 L16 11 M11 4 L16 12" stroke="#208070" stroke-width="1.3"/></svg>
<svg style="position:absolute;left:66px;top:455px" width="16" height="16" viewBox="0 0 16 16"><path d="M0 5 L5 5 M0 8 L5 8 M0 11 L5 11 M0 4 L5 12" stroke="#302880" stroke-width="1.3"/><path d="M6 8H10M8.5 6 L10.5 8 L8.5 10" stroke="#000" stroke-width="1.3" fill="none"/><path d="M10 6 Q10 4 12 4 Q13 4 13 5 Q13 4 14 4 Q16 4 16 6 Q16 9 13 12 Q10 9 10 6Z" fill="none" stroke="#c040c0" stroke-width="1.3"/></svg>
<svg style="position:absolute;left:94px;top:455px" width="16" height="16" viewBox="0 0 16 16"><path d="M0 5 L5 5 M0 8 L5 8 M0 11 L5 11 M0 4 L5 12" stroke="#302880" stroke-width="1.3"/><path d="M6 8H10M8.5 6 L10.5 8 L8.5 10" stroke="#000" stroke-width="1.3" fill="none"/><path d="M11 5 L16 5 M11 8 L16 8 M11 11 L16 11 M11 4 L16 12" stroke="#208070" stroke-width="1.3"/></svg>
<svg style="position:absolute;left:122px;top:455px" width="16" height="16" viewBox="0 0 16 16"><path d="M0 5 L5 5 M0 8 L5 8 M0 11 L5 11 M0 4 L5 12" stroke="#208070" stroke-width="1.3"/><path d="M6 8H10M8.5 6 L10.5 8 L8.5 10" stroke="#000" stroke-width="1.3" fill="none"/><path d="M10 6 Q10 4 12 4 Q13 4 13 5 Q13 4 14 4 Q16 4 16 6 Q16 9 13 12 Q10 9 10 6Z" fill="none" stroke="#c040c0" stroke-width="1.3"/></svg>
<svg style="position:absolute;left:10px;top:483px" width="16" height="16" viewBox="0 0 16 16"><path d="M0 5 L5 5 M0 8 L5 8 M0 11 L5 11 M0 4 L5 12" stroke="#208070" stroke-width="1.3"/><path d="M6 8H10M8.5 6 L10.5 8 L8.5 10" stroke="#000" stroke-width="1.3" fill="none"/><path d="M11 5 L16 5 M11 8 L16 8 M11 11 L16 11 M11 4 L16 12" stroke="#302880" stroke-width="1.3"/></svg>
<svg style="position:absolute;left:38px;top:483px" width="16" height="16" viewBox="0 0 16 16"><path d="M3 8 Q3 2 8 2 Q13 2 13 7 Q16 12 12 15 H4 Q0 12 3 8Z" fill="#3a98e0"/><path d="M4 13 L14 3" stroke="#e8d060" stroke-width="1.5"/></svg>
<svg style="position:absolute;left:66px;top:483px" width="16" height="16" viewBox="0 0 16 16"><rect x="2" y="2" width="12" height="12" fill="#3a5a78"/><rect x="6" y="2" width="4" height="7" fill="#d08040"/><rect x="2" y="9" width="12" height="2" fill="#8aa8c0"/></svg>
<svg style="position:absolute;left:94px;top:483px" width="16" height="16" viewBox="0 0 16 16"><path d="M8 2 L4 8 M8 2 L12 8 M4 8 L2 12 M4 8 L6 12 M12 8 L10 12 M12 8 L14 12" stroke="#d0a040" stroke-width="1.5"/><path d="M1 15H15" stroke="#a0a0a0"/><rect x="6" y="1" width="4" height="3" fill="#d0a040"/></svg>
<svg style="position:absolute;left:122px;top:483px" width="16" height="16" viewBox="0 0 16 16"><rect x="1" y="3" width="14" height="10" rx="3" fill="#a0a8b0" stroke="#606870"/><rect x="3" y="6" width="10" height="2" fill="#e0c040"/><rect x="3" y="8" width="10" height="2" fill="#40a060"/></svg>
<svg style="position:absolute;left:10px;top:511px" width="16" height="16" viewBox="0 0 16 16"><rect x="1" y="1" width="14" height="14" rx="2" fill="#8a9a40"/><path d="M3 5 Q8 9 13 5 M5 7V11 L8 13 L11 11V7" stroke="#f0e8e0" stroke-width="1.3" fill="none"/><path d="M4 6H12" stroke="#e04040"/></svg>
<svg style="position:absolute;left:38px;top:511px" width="16" height="16" viewBox="0 0 16 16"><path d="M4 2 L1 5 L3 8 L4 7 V14 H12 V7 L13 8 L15 5 L12 2 Q8 4 4 2Z" fill="#fff" stroke="#2a4a68" stroke-width="1.2"/></svg>
<svg style="position:absolute;left:66px;top:511px" width="16" height="16" viewBox="0 0 16 16"><rect x="3" y="2" width="2" height="2" fill="#2a88b0"/><rect x="7" y="2" width="2" height="2" fill="#2a88b0"/><rect x="11" y="2" width="2" height="2" fill="#2a88b0"/><rect x="3" y="6" width="2" height="8" fill="#2a88b0"/><rect x="7" y="6" width="2" height="8" fill="#2a88b0"/><rect x="11" y="6" width="2" height="8" fill="#2a88b0"/></svg>
<svg style="position:absolute;left:94px;top:511px" width="16" height="16" viewBox="0 0 16 16"><rect x="1" y="2" width="14" height="12" fill="#b82020"/><path d="M3 8H13M4 4V12M12 4V12" stroke="#f08080" stroke-dasharray="1 1"/></svg>
<svg style="position:absolute;left:122px;top:511px" width="16" height="16" viewBox="0 0 16 16"><rect x="2" y="4" width="12" height="11" fill="#f0f0f0" stroke="#c0c0c0"/><path d="M3 3H13" stroke="#e0a040" stroke-width="2"/><path d="M11 1 L14 3 L11 5" fill="#e0a040"/><path d="M5 8 L11 13" stroke="#3a6aa0" stroke-width="1.5"/></svg>
<svg style="position:absolute;left:10px;top:539px" width="16" height="16" viewBox="0 0 16 16"><path d="M8 1 L14 14 H2Z" fill="#1a3868"/><path d="M6 6H10M5 9H11M4 12H12" stroke="#e8f0f8" stroke-width="1.2"/></svg>
<svg style="position:absolute;left:38px;top:539px" width="16" height="16" viewBox="0 0 16 16"><rect x="2" y="1" width="10" height="14" fill="#e8f0f8" stroke="#8098b0"/><rect x="4" y="4" width="5" height="8" fill="#3a5a78"/><path d="M15 8H8M10 6 L8 8 L10 10" stroke="#c04040" stroke-width="1.2" fill="none"/></svg>
<svg style="position:absolute;left:66px;top:539px" width="16" height="16" viewBox="0 0 16 16"><path d="M6 5 H10 Q3 5 3 9 Q3 14 10 13" stroke="#2a7a30" stroke-width="3" fill="none"/><path d="M9 1 L14 5 L9 9Z" fill="#2a7a30"/></svg>
<svg style="position:absolute;left:94px;top:539px" width="16" height="16" viewBox="0 0 16 16"><rect x="6" y="1" width="4" height="7" fill="#60c030" stroke="#308020"/><path d="M2 7H14L8 13Z" fill="#60c030" stroke="#308020"/><rect x="2" y="13" width="12" height="2" fill="#40a020"/></svg>
<svg style="position:absolute;left:122px;top:539px" width="16" height="16" viewBox="0 0 16 16"><path d="M8 8 L13 2 Q15 1 15 3 L9 10Z" fill="#3a88d0" stroke="#1a5aa0"/><path d="M8 9 L3 14 L2 13 L7 8" stroke="#808890" stroke-width="1.5" fill="#e0e0e0"/></svg>
<svg style="position:absolute;left:10px;top:567px" width="16" height="16" viewBox="0 0 16 16"><path d="M2 8 Q4 3 8 5 Q12 3 14 8 Q12 13 8 11 Q4 13 2 8Z" fill="none" stroke="#b060b0" stroke-width="1.2"/></svg>
<svg style="position:absolute;left:38px;top:567px" width="16" height="16" viewBox="0 0 16 16"><path d="M2 3H9V7M7 5 L9 7 L11 5" stroke="#000" stroke-width="1.3" fill="none"/><text x="8" y="15" font-family="Liberation Sans" font-size="6.5" font-weight="bold" fill="#000" text-anchor="middle">HCD</text></svg>
<svg style="position:absolute;left:66px;top:567px" width="16" height="16" viewBox="0 0 16 16"><path d="M3 3V12M1 10 L3 12 L5 10M13 3V12M11 10 L13 12 L15 10M6 8H10" stroke="#1a2a80" stroke-width="1.3" fill="none"/></svg>
<svg style="position:absolute;left:94px;top:567px" width="16" height="16" viewBox="0 0 16 16"><text x="6" y="11" font-family="Liberation Sans" font-size="6" font-weight="bold" fill="#d08030" text-anchor="middle">HCD</text><path d="M14 3V13M12 5 L14 3 L16 5" stroke="#1a2a80" stroke-width="1.3" fill="none"/></svg>
<svg style="position:absolute;left:122px;top:567px" width="16" height="16" viewBox="0 0 16 16"><rect x="2" y="2" width="2" height="12" fill="#1a2060"/><rect x="6" y="2" width="2" height="12" fill="#802080"/><rect x="10" y="2" width="2" height="12" fill="#1a2060"/></svg>
<svg style="position:absolute;left:10px;top:595px" width="16" height="16" viewBox="0 0 16 16"><rect x="2" y="3" width="6" height="10" fill="#f8e020"/><rect x="8" y="3" width="6" height="10" fill="#e020e0"/><path d="M1.5 3V13M14.5 3V13" stroke="#c04040" stroke-dasharray="1 1"/></svg>
<svg style="position:absolute;left:38px;top:595px" width="16" height="16" viewBox="0 0 16 16"><rect x="2" y="3" width="12" height="10" fill="#f08050"/><path d="M1.5 3V13M14.5 3V13" stroke="#a04080" stroke-dasharray="1 1"/></svg>
<svg style="position:absolute;left:66px;top:595px" width="16" height="16" viewBox="0 0 16 16"><path d="M8 8 L13 2 Q15 1 15 3 L9 10Z" fill="#3a88d0" stroke="#1a5aa0"/><path d="M8 9 L3 14 L2 13 L7 8" stroke="#808890" stroke-width="1.5" fill="#e0e0e0"/><text x="13" y="15" font-family="Liberation Sans" font-size="6" font-weight="bold" fill="#000" text-anchor="middle">J</text></svg>
<svg style="position:absolute;left:94px;top:595px" width="16" height="16" viewBox="0 0 16 16"><path d="M2 14 L4 3 L8 14Z" fill="#6a80d8"/><path d="M8 14 L12 3 L14 14Z" fill="#6a80d8"/></svg>
<svg style="position:absolute;left:122px;top:595px" width="16" height="16" viewBox="0 0 16 16"><path d="M5 2 Q8 6 11 2" stroke="#c04040" fill="none" stroke-width="1.2"/><circle cx="8" cy="10" r="3.5" fill="none" stroke="#c04040" stroke-width="1.2"/></svg>
<svg style="position:absolute;left:10px;top:623px" width="16" height="16" viewBox="0 0 16 16"><rect x="1" y="1" width="14" height="14" fill="#1a2a58"/><path d="M3 3 L5 7 L7 3M9 8 L11 12 L13 8M5 10 L7 13 L9 10" stroke="#c8d8e8" stroke-width="1.3" fill="none"/></svg>
<svg style="position:absolute;left:38px;top:623px" width="16" height="16" viewBox="0 0 16 16"><rect x="3" y="2" width="6" height="7" fill="none" stroke="#3a2a90" stroke-width="1.2"/><rect x="7" y="7" width="6" height="7" fill="none" stroke="#c04040" stroke-width="1.2"/></svg>
<svg style="position:absolute;left:66px;top:623px" width="16" height="16" viewBox="0 0 16 16"><path d="M2 3H14V6H10V10H14V13H2V10H6V6H2Z" fill="#d85020"/></svg>
<svg style="position:absolute;left:94px;top:623px" width="16" height="16" viewBox="0 0 16 16"><rect x="3" y="2" width="3" height="12" fill="#f09070"/><rect x="8" y="4" width="4" height="2" fill="#1a2060"/><rect x="8" y="10" width="4" height="2" fill="#1a2060"/></svg>
<svg style="position:absolute;left:122px;top:623px" width="16" height="16" viewBox="0 0 16 16"><text x="7" y="11" font-family="Liberation Sans" font-size="6" font-weight="bold" fill="#d07030" text-anchor="middle">CNT</text><path d="M14 3V13M12 5 L14 3 L16 5" stroke="#1a2a80" stroke-width="1.3" fill="none"/></svg>
<svg style="position:absolute;left:10px;top:651px" width="16" height="16" viewBox="0 0 16 16"><text x="8" y="12" font-family="Liberation Sans" font-size="9" font-weight="normal" fill="#c89870" text-anchor="middle">ICJ</text></svg>
<svg style="position:absolute;left:38px;top:651px" width="16" height="16" viewBox="0 0 16 16"><rect x="2" y="1" width="12" height="3" fill="#a08070"/><path d="M2 13 L8 6 L14 13" fill="none" stroke="#8090a0"/><rect x="2" y="11" width="12" height="4" fill="#5a6a80"/></svg>
<svg style="position:absolute;left:66px;top:651px" width="16" height="16" viewBox="0 0 16 16"><rect x="1" y="2" width="12" height="2" fill="#c040c0"/><rect x="1" y="12" width="12" height="2" fill="#c040c0"/><text x="7" y="11" font-family="Liberation Sans" font-size="6.5" font-weight="bold" fill="#d07030" text-anchor="middle">HCD</text><path d="M14 3V13M12 5 L14 3 L16 5" stroke="#1a2a80" stroke-width="1.2" fill="none"/></svg>
<svg style="position:absolute;left:94px;top:651px" width="16" height="16" viewBox="0 0 16 16"><text x="6" y="12" font-family="Liberation Sans" font-size="9" font-weight="normal" fill="#c89870" text-anchor="middle">ICJ</text><path d="M14 3V13M12 5 L14 3 L16 5" stroke="#1a2a80" stroke-width="1.2" fill="none"/></svg>
<svg style="position:absolute;left:122px;top:651px" width="16" height="16" viewBox="0 0 16 16"><circle cx="8" cy="8" r="7" fill="#1a2a58"/><path d="M4 5 L6 9 L8 5M8 9 L10 13 L12 9" stroke="#c8d8e8" stroke-width="1.2" fill="none"/></svg>
<svg style="position:absolute;left:10px;top:679px" width="16" height="16" viewBox="0 0 16 16"><rect x="5" y="1" width="6" height="7" fill="#60c030" stroke="#308020"/><path d="M2 7H14L8 12Z" fill="#60c030" stroke="#308020"/><path d="M4 11 L12 16 M12 11 L4 16" stroke="#e04020" stroke-width="1.8"/></svg>
<svg style="position:absolute;left:38px;top:679px" width="16" height="16" viewBox="0 0 16 16"><rect x="1" y="1" width="7" height="7" fill="#40c030" stroke="#208020"/><rect x="8" y="8" width="7" height="7" fill="#d02020" stroke="#901010"/><path d="M10 2H14V5M12 4 L14 6 L15 4M6 14H2V11M1 12 L2 10 L4 12" stroke="#202020" stroke-width="1.2" fill="none"/></svg>
<svg style="position:absolute;left:66px;top:679px" width="16" height="16" viewBox="0 0 16 16"><rect x="1" y="5" width="12" height="10" fill="#d8e8f8" stroke="#5a80b0"/><path d="M3 10H11M3 12H11" stroke="#4a70a0"/><path d="M6 5 Q9 1 13 2 L15 1 V6 Q11 6 8 7Z" fill="#f0e090"/></svg>
<svg style="position:absolute;left:94px;top:679px" width="16" height="16" viewBox="0 0 16 16"><rect x="1" y="2" width="7" height="6" fill="#4a80c0"/><rect x="6" y="7" width="8" height="7" fill="none" stroke="#3a3a90" stroke-width="1.3"/><path d="M6 10H14M10 7V14" stroke="#3a3a90"/></svg>
<svg style="position:absolute;left:122px;top:679px" width="16" height="16" viewBox="0 0 16 16"><path d="M1 6 Q1 4 3 4 Q4 4 4 5 Q4 4 5 4 Q7 4 7 6 Q7 9 4 12 Q1 9 1 6Z" fill="none" stroke="#c040c0" stroke-width="1.3"/><path d="M9 3H13V6M11 5 L13 7 L15 5M7 13H3V10M1 11 L3 9 L5 11" stroke="#202020" stroke-width="1.2" fill="none"/><path d="M10 11 Q10 9 12 9 Q14 9 14 11 Q14 13 12 15 Q10 13 10 11Z" fill="none" stroke="#c040c0" stroke-width="1.2"/></svg>
<svg style="position:absolute;left:10px;top:707px" width="16" height="16" viewBox="0 0 16 16"><rect x="1" y="3" width="14" height="4" fill="#e8a0c0"/><rect x="1" y="9" width="14" height="4" fill="#e8a0c0"/><path d="M2 5H14M2 11H14" stroke="#3a2a80" stroke-dasharray="2 2" stroke-width="1.5"/></svg>
<svg style="position:absolute;left:38px;top:707px" width="16" height="16" viewBox="0 0 16 16"><rect x="1.5" y="1.5" width="13" height="13" fill="#b8c0f0" stroke="#202040" stroke-dasharray="1.5 1"/><circle cx="8" cy="8" r="4" fill="#2030e0"/></svg>
<svg style="position:absolute;left:66px;top:707px" width="16" height="16" viewBox="0 0 16 16"><path d="M2 14 H14 V3 H12 V5 H10 V7 H8 V9 H6 V11 H4 V13 H2Z" fill="#a01010"/></svg>
<svg style="position:absolute;left:94px;top:707px" width="16" height="16" viewBox="0 0 16 16"><path d="M2 14 H14 V3Z" fill="#901010"/></svg>
<svg style="position:absolute;left:122px;top:707px" width="16" height="16" viewBox="0 0 16 16"><path d="M5 3H11L14 14H2Z" fill="#208020"/><path d="M7 3H9L11 14H5Z" fill="#a01010"/></svg>
<svg style="position:absolute;left:10px;top:735px" width="16" height="16" viewBox="0 0 16 16"><circle cx="8" cy="8" r="6.5" fill="none" stroke="#a0a8b4" stroke-width="1.5"/><circle cx="8" cy="8" r="3" fill="none" stroke="#b8c8d8" stroke-width="1.5" stroke-dasharray="1.5 1"/></svg>
<div style="position:absolute;left:166px;top:74px;width:1202px;height:22px;background:#eceef8;"></div>
<div style="position:absolute;left:166px;top:76px;width:1202px;height:19px;background:#a0a0a8;"></div>
<div style="position:absolute;left:167px;top:77px;width:18px;height:18px;background:#efeff2;"></div>
<div style="position:absolute;left:187px;top:77px;width:1181px;height:17px;background:#fefefe;"></div>
<div style="position:absolute;left:185px;top:77px;width:2px;height:17px;background:#202020;"></div>
<svg style="position:absolute;left:0;top:0" width="1368" height="100"><rect x="196" y="89" width="1" height="4" fill="#101010"/><rect x="206" y="87" width="1" height="6" fill="#101010"/><text x="206.9" y="86" font-family="Liberation Sans" font-size="9.5" font-weight="normal" fill="#000" stroke="#000" stroke-width="0.2" text-anchor="end">10</text><rect x="216" y="89" width="1" height="4" fill="#101010"/><rect x="226" y="87" width="1" height="6" fill="#101010"/><text x="226.9" y="86" font-family="Liberation Sans" font-size="9.5" font-weight="normal" fill="#000" stroke="#000" stroke-width="0.2" text-anchor="end">20</text><rect x="236" y="89" width="1" height="4" fill="#101010"/><rect x="246" y="87" width="1" height="6" fill="#101010"/><text x="246.9" y="86" font-family="Liberation Sans" font-size="9.5" font-weight="normal" fill="#000" stroke="#000" stroke-width="0.2" text-anchor="end">30</text><rect x="256" y="89" width="1" height="4" fill="#101010"/><rect x="266" y="87" width="1" height="6" fill="#101010"/><text x="266.9" y="86" font-family="Liberation Sans" font-size="9.5" font-weight="normal" fill="#000" stroke="#000" stroke-width="0.2" text-anchor="end">40</text><rect x="276" y="89" width="1" height="4" fill="#101010"/><rect x="286" y="80" width="1" height="13" fill="#101010"/><text x="286.9" y="86" font-family="Liberation Sans" font-size="9.5" font-weight="bold" fill="#000" stroke="#000" stroke-width="0.2" text-anchor="end">50</text><rect x="296" y="89" width="1" height="4" fill="#101010"/><rect x="306" y="87" width="1" height="6" fill="#101010"/><text x="306.9" y="86" font-family="Liberation Sans" font-size="9.5" font-weight="normal" fill="#000" stroke="#000" stroke-width="0.2" text-anchor="end">60</text><rect x="316" y="89" width="1" height="4" fill="#101010"/><rect x="326" y="87" width="1" height="6" fill="#101010"/><text x="326.9" y="86" font-family="Liberation Sans" font-size="9.5" font-weight="normal" fill="#000" stroke="#000" stroke-width="0.2" text-anchor="end">70</text><rect x="336" y="89" width="1" height="4" fill="#101010"/><rect x="346" y="87" width="1" height="6" fill="#101010"/><text x="346.9" y="86" font-family="Liberation Sans" font-size="9.5" font-weight="normal" fill="#000" stroke="#000" stroke-width="0.2" text-anchor="end">80</text><rect x="356" y="89" width="1" height="4" fill="#101010"/><rect x="366" y="87" width="1" height="6" fill="#101010"/><text x="366.9" y="86" font-family="Liberation Sans" font-size="9.5" font-weight="normal" fill="#000" stroke="#000" stroke-width="0.2" text-anchor="end">90</text><rect x="376" y="89" width="1" height="4" fill="#101010"/><rect x="386" y="80" width="1" height="13" fill="#101010"/><text x="386.9" y="86" font-family="Liberation Sans" font-size="9.5" font-weight="bold" fill="#000" stroke="#000" stroke-width="0.2" text-anchor="end">100</text><rect x="396" y="89" width="1" height="4" fill="#101010"/><rect x="406" y="87" width="1" height="6" fill="#101010"/><text x="406.9" y="86" font-family="Liberation Sans" font-size="9.5" font-weight="normal" fill="#000" stroke="#000" stroke-width="0.2" text-anchor="end">110</text><rect x="416" y="89" width="1" height="4" fill="#101010"/><rect x="426" y="87" width="1" height="6" fill="#101010"/><text x="426.9" y="86" font-family="Liberation Sans" font-size="9.5" font-weight="normal" fill="#000" stroke="#000" stroke-width="0.2" text-anchor="end">120</text><rect x="436" y="89" width="1" height="4" fill="#101010"/><rect x="446" y="87" width="1" height="6" fill="#101010"/><text x="446.9" y="86" font-family="Liberation Sans" font-size="9.5" font-weight="normal" fill="#000" stroke="#000" stroke-width="0.2" text-anchor="end">130</text><rect x="456" y="89" width="1" height="4" fill="#101010"/><rect x="466" y="87" width="1" height="6" fill="#101010"/><text x="466.9" y="86" font-family="Liberation Sans" font-size="9.5" font-weight="normal" fill="#000" stroke="#000" stroke-width="0.2" text-anchor="end">140</text><rect x="476" y="89" width="1" height="4" fill="#101010"/><rect x="486" y="80" width="1" height="13" fill="#101010"/><text x="486.9" y="86" font-family="Liberation Sans" font-size="9.5" font-weight="bold" fill="#000" stroke="#000" stroke-width="0.2" text-anchor="end">150</text><rect x="496" y="89" width="1" height="4" fill="#101010"/><rect x="506" y="87" width="1" height="6" fill="#101010"/><text x="506.9" y="86" font-family="Liberation Sans" font-size="9.5" font-weight="normal" fill="#000" stroke="#000" stroke-width="0.2" text-anchor="end">160</text><rect x="516" y="89" width="1" height="4" fill="#101010"/><rect x="526" y="87" width="1" height="6" fill="#101010"/><text x="526.9" y="86" font-family="Liberation Sans" font-size="9.5" font-weight="normal" fill="#000" stroke="#000" stroke-width="0.2" text-anchor="end">170</text><rect x="536" y="89" width="1" height="4" fill="#101010"/><rect x="546" y="87" width="1" height="6" fill="#101010"/><text x="546.9" y="86" font-family="Liberation Sans" font-size="9.5" font-weight="normal" fill="#000" stroke="#000" stroke-width="0.2" text-anchor="end">180</text><rect x="556" y="89" width="1" height="4" fill="#101010"/><rect x="566" y="87" width="1" height="6" fill="#101010"/><text x="566.9" y="86" font-family="Liberation Sans" font-size="9.5" font-weight="normal" fill="#000" stroke="#000" stroke-width="0.2" text-anchor="end">190</text><rect x="576" y="89" width="1" height="4" fill="#101010"/><rect x="586" y="80" width="1" height="13" fill="#101010"/><text x="586.9" y="86" font-family="Liberation Sans" font-size="9.5" font-weight="bold" fill="#000" stroke="#000" stroke-width="0.2" text-anchor="end">200</text><rect x="596" y="89" width="1" height="4" fill="#101010"/><rect x="606" y="87" width="1" height="6" fill="#101010"/><text x="606.9" y="86" font-family="Liberation Sans" font-size="9.5" font-weight="normal" fill="#000" stroke="#000" stroke-width="0.2" text-anchor="end">210</text><rect x="616" y="89" width="1" height="4" fill="#101010"/><rect x="626" y="87" width="1" height="6" fill="#101010"/><text x="626.9" y="86" font-family="Liberation Sans" font-size="9.5" font-weight="normal" fill="#000" stroke="#000" stroke-width="0.2" text-anchor="end">220</text><rect x="636" y="89" width="1" height="4" fill="#101010"/><rect x="646" y="87" width="1" height="6" fill="#101010"/><text x="646.9" y="86" font-family="Liberation Sans" font-size="9.5" font-weight="normal" fill="#000" stroke="#000" stroke-width="0.2" text-anchor="end">230</text><rect x="656" y="89" width="1" height="4" fill="#101010"/><rect x="666" y="87" width="1" height="6" fill="#101010"/><text x="666.9" y="86" font-family="Liberation Sans" font-size="9.5" font-weight="normal" fill="#000" stroke="#000" stroke-width="0.2" text-anchor="end">240</text><rect x="676" y="89" width="1" height="4" fill="#101010"/><rect x="686" y="80" width="1" height="13" fill="#101010"/><text x="686.9" y="86" font-family="Liberation Sans" font-size="9.5" font-weight="bold" fill="#000" stroke="#000" stroke-width="0.2" text-anchor="end">250</text><rect x="696" y="89" width="1" height="4" fill="#101010"/><rect x="706" y="87" width="1" height="6" fill="#101010"/><text x="706.9" y="86" font-family="Liberation Sans" font-size="9.5" font-weight="normal" fill="#000" stroke="#000" stroke-width="0.2" text-anchor="end">260</text><rect x="716" y="89" width="1" height="4" fill="#101010"/><rect x="726" y="87" width="1" height="6" fill="#101010"/><text x="726.9" y="86" font-family="Liberation Sans" font-size="9.5" font-weight="normal" fill="#000" stroke="#000" stroke-width="0.2" text-anchor="end">270</text><rect x="736" y="89" width="1" height="4" fill="#101010"/><rect x="746" y="87" width="1" height="6" fill="#101010"/><text x="746.9" y="86" font-family="Liberation Sans" font-size="9.5" font-weight="normal" fill="#000" stroke="#000" stroke-width="0.2" text-anchor="end">280</text><rect x="756" y="89" width="1" height="4" fill="#101010"/><rect x="766" y="87" width="1" height="6" fill="#101010"/><text x="766.9" y="86" font-family="Liberation Sans" font-size="9.5" font-weight="normal" fill="#000" stroke="#000" stroke-width="0.2" text-anchor="end">290</text><rect x="776" y="89" width="1" height="4" fill="#101010"/><rect x="786" y="80" width="1" height="13" fill="#101010"/><text x="786.9" y="86" font-family="Liberation Sans" font-size="9.5" font-weight="bold" fill="#000" stroke="#000" stroke-width="0.2" text-anchor="end">300</text><rect x="796" y="89" width="1" height="4" fill="#101010"/><rect x="806" y="87" width="1" height="6" fill="#101010"/><text x="806.9" y="86" font-family="Liberation Sans" font-size="9.5" font-weight="normal" fill="#000" stroke="#000" stroke-width="0.2" text-anchor="end">310</text><rect x="816" y="89" width="1" height="4" fill="#101010"/><rect x="826" y="87" width="1" height="6" fill="#101010"/><text x="826.9" y="86" font-family="Liberation Sans" font-size="9.5" font-weight="normal" fill="#000" stroke="#000" stroke-width="0.2" text-anchor="end">320</text><rect x="836" y="89" width="1" height="4" fill="#101010"/><rect x="846" y="87" width="1" height="6" fill="#101010"/><text x="846.9" y="86" font-family="Liberation Sans" font-size="9.5" font-weight="normal" fill="#000" stroke="#000" stroke-width="0.2" text-anchor="end">330</text><rect x="856" y="89" width="1" height="4" fill="#101010"/><rect x="866" y="87" width="1" height="6" fill="#101010"/><text x="866.9" y="86" font-family="Liberation Sans" font-size="9.5" font-weight="normal" fill="#000" stroke="#000" stroke-width="0.2" text-anchor="end">340</text><rect x="876" y="89" width="1" height="4" fill="#101010"/><rect x="886" y="80" width="1" height="13" fill="#101010"/><text x="886.9" y="86" font-family="Liberation Sans" font-size="9.5" font-weight="bold" fill="#000" stroke="#000" stroke-width="0.2" text-anchor="end">350</text><rect x="896" y="89" width="1" height="4" fill="#101010"/><rect x="906" y="87" width="1" height="6" fill="#101010"/><text x="906.9" y="86" font-family="Liberation Sans" font-size="9.5" font-weight="normal" fill="#000" stroke="#000" stroke-width="0.2" text-anchor="end">360</text><rect x="916" y="89" width="1" height="4" fill="#101010"/><rect x="926" y="87" width="1" height="6" fill="#101010"/><text x="926.9" y="86" font-family="Liberation Sans" font-size="9.5" font-weight="normal" fill="#000" stroke="#000" stroke-width="0.2" text-anchor="end">370</text><rect x="936" y="89" width="1" height="4" fill="#101010"/><rect x="946" y="87" width="1" height="6" fill="#101010"/><text x="946.9" y="86" font-family="Liberation Sans" font-size="9.5" font-weight="normal" fill="#000" stroke="#000" stroke-width="0.2" text-anchor="end">380</text><rect x="956" y="89" width="1" height="4" fill="#101010"/><rect x="966" y="87" width="1" height="6" fill="#101010"/><text x="966.9" y="86" font-family="Liberation Sans" font-size="9.5" font-weight="normal" fill="#000" stroke="#000" stroke-width="0.2" text-anchor="end">390</text><rect x="976" y="89" width="1" height="4" fill="#101010"/><rect x="986" y="80" width="1" height="13" fill="#101010"/><text x="986.9" y="86" font-family="Liberation Sans" font-size="9.5" font-weight="bold" fill="#000" stroke="#000" stroke-width="0.2" text-anchor="end">400</text><rect x="996" y="89" width="1" height="4" fill="#101010"/><rect x="1006" y="87" width="1" height="6" fill="#101010"/><text x="1006.9" y="86" font-family="Liberation Sans" font-size="9.5" font-weight="normal" fill="#000" stroke="#000" stroke-width="0.2" text-anchor="end">410</text><rect x="1016" y="89" width="1" height="4" fill="#101010"/><rect x="1026" y="87" width="1" height="6" fill="#101010"/><text x="1026.9" y="86" font-family="Liberation Sans" font-size="9.5" font-weight="normal" fill="#000" stroke="#000" stroke-width="0.2" text-anchor="end">420</text><rect x="1036" y="89" width="1" height="4" fill="#101010"/><rect x="1046" y="87" width="1" height="6" fill="#101010"/><text x="1046.9" y="86" font-family="Liberation Sans" font-size="9.5" font-weight="normal" fill="#000" stroke="#000" stroke-width="0.2" text-anchor="end">430</text><rect x="1056" y="89" width="1" height="4" fill="#101010"/><rect x="1066" y="87" width="1" height="6" fill="#101010"/><text x="1066.9" y="86" font-family="Liberation Sans" font-size="9.5" font-weight="normal" fill="#000" stroke="#000" stroke-width="0.2" text-anchor="end">440</text><rect x="1076" y="89" width="1" height="4" fill="#101010"/><rect x="1086" y="80" width="1" height="13" fill="#101010"/><text x="1086.9" y="86" font-family="Liberation Sans" font-size="9.5" font-weight="bold" fill="#000" stroke="#000" stroke-width="0.2" text-anchor="end">450</text><rect x="1096" y="89" width="1" height="4" fill="#101010"/><rect x="1106" y="87" width="1" height="6" fill="#101010"/><text x="1106.9" y="86" font-family="Liberation Sans" font-size="9.5" font-weight="normal" fill="#000" stroke="#000" stroke-width="0.2" text-anchor="end">460</text><rect x="1116" y="89" width="1" height="4" fill="#101010"/><rect x="1126" y="87" width="1" height="6" fill="#101010"/><text x="1126.9" y="86" font-family="Liberation Sans" font-size="9.5" font-weight="normal" fill="#000" stroke="#000" stroke-width="0.2" text-anchor="end">470</text><rect x="1136" y="89" width="1" height="4" fill="#101010"/><rect x="1146" y="87" width="1" height="6" fill="#101010"/><text x="1146.9" y="86" font-family="Liberation Sans" font-size="9.5" font-weight="normal" fill="#000" stroke="#000" stroke-width="0.2" text-anchor="end">480</text><rect x="1156" y="89" width="1" height="4" fill="#101010"/><rect x="1166" y="87" width="1" height="6" fill="#101010"/><text x="1166.9" y="86" font-family="Liberation Sans" font-size="9.5" font-weight="normal" fill="#000" stroke="#000" stroke-width="0.2" text-anchor="end">490</text><rect x="1176" y="89" width="1" height="4" fill="#101010"/><rect x="1186" y="80" width="1" height="13" fill="#101010"/><text x="1186.9" y="86" font-family="Liberation Sans" font-size="9.5" font-weight="bold" fill="#000" stroke="#000" stroke-width="0.2" text-anchor="end">500</text><rect x="1196" y="89" width="1" height="4" fill="#101010"/><rect x="1206" y="87" width="1" height="6" fill="#101010"/><text x="1206.9" y="86" font-family="Liberation Sans" font-size="9.5" font-weight="normal" fill="#000" stroke="#000" stroke-width="0.2" text-anchor="end">510</text><rect x="1216" y="89" width="1" height="4" fill="#101010"/><rect x="1226" y="87" width="1" height="6" fill="#101010"/><text x="1226.9" y="86" font-family="Liberation Sans" font-size="9.5" font-weight="normal" fill="#000" stroke="#000" stroke-width="0.2" text-anchor="end">520</text><rect x="1236" y="89" width="1" height="4" fill="#101010"/><rect x="1246" y="87" width="1" height="6" fill="#101010"/><text x="1246.9" y="86" font-family="Liberation Sans" font-size="9.5" font-weight="normal" fill="#000" stroke="#000" stroke-width="0.2" text-anchor="end">530</text><rect x="1256" y="89" width="1" height="4" fill="#101010"/><rect x="1266" y="87" width="1" height="6" fill="#101010"/><text x="1266.9" y="86" font-family="Liberation Sans" font-size="9.5" font-weight="normal" fill="#000" stroke="#000" stroke-width="0.2" text-anchor="end">540</text><rect x="1276" y="89" width="1" height="4" fill="#101010"/><rect x="1286" y="80" width="1" height="13" fill="#101010"/><text x="1286.9" y="86" font-family="Liberation Sans" font-size="9.5" font-weight="bold" fill="#000" stroke="#000" stroke-width="0.2" text-anchor="end">550</text><rect x="1296" y="89" width="1" height="4" fill="#101010"/><rect x="1306" y="87" width="1" height="6" fill="#101010"/><text x="1306.9" y="86" font-family="Liberation Sans" font-size="9.5" font-weight="normal" fill="#000" stroke="#000" stroke-width="0.2" text-anchor="end">560</text><rect x="1316" y="89" width="1" height="4" fill="#101010"/><rect x="1326" y="87" width="1" height="6" fill="#101010"/><text x="1326.9" y="86" font-family="Liberation Sans" font-size="9.5" font-weight="normal" fill="#000" stroke="#000" stroke-width="0.2" text-anchor="end">570</text><rect x="1336" y="89" width="1" height="4" fill="#101010"/><rect x="1346" y="87" width="1" height="6" fill="#101010"/><text x="1346.9" y="86" font-family="Liberation Sans" font-size="9.5" font-weight="normal" fill="#000" stroke="#000" stroke-width="0.2" text-anchor="end">580</text><rect x="1356" y="89" width="1" height="4" fill="#101010"/><rect x="1366" y="87" width="1" height="6" fill="#101010"/><text x="1366.9" y="86" font-family="Liberation Sans" font-size="9.5" font-weight="normal" fill="#000" stroke="#000" stroke-width="0.2" text-anchor="end">590</text><rect x="1324" y="77" width="1" height="17" fill="#303030"/><ellipse cx="1324.5" cy="83" rx="1.5" ry="2.5" fill="#3a78d8"/></svg>
<div style="position:absolute;left:166px;top:95px;width:20px;height:843px;background:#a0a0a8;"></div>
<div style="position:absolute;left:167px;top:96px;width:18px;height:841px;background:#fefefe;"></div>
<svg style="position:absolute;left:0;top:95px" width="200" height="843" viewBox="0 95 200 843"><rect x="177" y="103" width="6" height="1" fill="#101010"/><text x="0" y="0" transform="translate(176.5 97.1) rotate(-90)" font-family="Liberation Sans" font-size="9.5" font-weight="normal" fill="#000" stroke="#000" stroke-width="0.2" text-anchor="middle">420</text><rect x="179" y="113" width="4" height="1" fill="#101010"/><rect x="177" y="123" width="6" height="1" fill="#101010"/><text x="0" y="0" transform="translate(176.5 117.1) rotate(-90)" font-family="Liberation Sans" font-size="9.5" font-weight="normal" fill="#000" stroke="#000" stroke-width="0.2" text-anchor="middle">410</text><rect x="179" y="133" width="4" height="1" fill="#101010"/><rect x="170" y="143" width="13" height="1" fill="#101010"/><text x="0" y="0" transform="translate(176.5 137.1) rotate(-90)" font-family="Liberation Sans" font-size="9.5" font-weight="bold" fill="#000" stroke="#000" stroke-width="0.2" text-anchor="middle">400</text><rect x="179" y="153" width="4" height="1" fill="#101010"/><rect x="177" y="163" width="6" height="1" fill="#101010"/><text x="0" y="0" transform="translate(176.5 157.1) rotate(-90)" font-family="Liberation Sans" font-size="9.5" font-weight="normal" fill="#000" stroke="#000" stroke-width="0.2" text-anchor="middle">390</text><rect x="179" y="173" width="4" height="1" fill="#101010"/><rect x="177" y="183" width="6" height="1" fill="#101010"/><text x="0" y="0" transform="translate(176.5 177.1) rotate(-90)" font-family="Liberation Sans" font-size="9.5" font-weight="normal" fill="#000" stroke="#000" stroke-width="0.2" text-anchor="middle">380</text><rect x="179" y="193" width="4" height="1" fill="#101010"/><rect x="177" y="203" width="6" height="1" fill="#101010"/><text x="0" y="0" transform="translate(176.5 197.2) rotate(-90)" font-family="Liberation Sans" font-size="9.5" font-weight="normal" fill="#000" stroke="#000" stroke-width="0.2" text-anchor="middle">370</text><rect x="179" y="213" width="4" height="1" fill="#101010"/><rect x="177" y="223" width="6" height="1" fill="#101010"/><text x="0" y="0" transform="translate(176.5 217.2) rotate(-90)" font-family="Liberation Sans" font-size="9.5" font-weight="normal" fill="#000" stroke="#000" stroke-width="0.2" text-anchor="middle">360</text><rect x="179" y="233" width="4" height="1" fill="#101010"/><rect x="170" y="243" width="13" height="1" fill="#101010"/><text x="0" y="0" transform="translate(176.5 237.2) rotate(-90)" font-family="Liberation Sans" font-size="9.5" font-weight="bold" fill="#000" stroke="#000" stroke-width="0.2" text-anchor="middle">350</text><rect x="179" y="253" width="4" height="1" fill="#101010"/><rect x="177" y="263" width="6" height="1" fill="#101010"/><text x="0" y="0" transform="translate(176.5 257.2) rotate(-90)" font-family="Liberation Sans" font-size="9.5" font-weight="normal" fill="#000" stroke="#000" stroke-width="0.2" text-anchor="middle">340</text><rect x="179" y="273" width="4" height="1" fill="#101010"/><rect x="177" y="283" width="6" height="1" fill="#101010"/><text x="0" y="0" transform="translate(176.5 277.2) rotate(-90)" font-family="Liberation Sans" font-size="9.5" font-weight="normal" fill="#000" stroke="#000" stroke-width="0.2" text-anchor="middle">330</text><rect x="179" y="293" width="4" height="1" fill="#101010"/><rect x="177" y="303" width="6" height="1" fill="#101010"/><text x="0" y="0" transform="translate(176.5 297.3) rotate(-90)" font-family="Liberation Sans" font-size="9.5" font-weight="normal" fill="#000" stroke="#000" stroke-width="0.2" text-anchor="middle">320</text><rect x="179" y="313" width="4" height="1" fill="#101010"/><rect x="177" y="323" width="6" height="1" fill="#101010"/><text x="0" y="0" transform="translate(176.5 317.3) rotate(-90)" font-family="Liberation Sans" font-size="9.5" font-weight="normal" fill="#000" stroke="#000" stroke-width="0.2" text-anchor="middle">310</text><rect x="179" y="333" width="4" height="1" fill="#101010"/><rect x="170" y="343" width="13" height="1" fill="#101010"/><text x="0" y="0" transform="translate(176.5 337.3) rotate(-90)" font-family="Liberation Sans" font-size="9.5" font-weight="bold" fill="#000" stroke="#000" stroke-width="0.2" text-anchor="middle">300</text><rect x="179" y="353" width="4" height="1" fill="#101010"/><rect x="177" y="363" width="6" height="1" fill="#101010"/><text x="0" y="0" transform="translate(176.5 357.3) rotate(-90)" font-family="Liberation Sans" font-size="9.5" font-weight="normal" fill="#000" stroke="#000" stroke-width="0.2" text-anchor="middle">290</text><rect x="179" y="373" width="4" height="1" fill="#101010"/><rect x="177" y="383" width="6" height="1" fill="#101010"/><text x="0" y="0" transform="translate(176.5 377.3) rotate(-90)" font-family="Liberation Sans" font-size="9.5" font-weight="normal" fill="#000" stroke="#000" stroke-width="0.2" text-anchor="middle">280</text><rect x="179" y="393" width="4" height="1" fill="#101010"/><rect x="177" y="403" width="6" height="1" fill="#101010"/><text x="0" y="0" transform="translate(176.5 397.4) rotate(-90)" font-family="Liberation Sans" font-size="9.5" font-weight="normal" fill="#000" stroke="#000" stroke-width="0.2" text-anchor="middle">270</text><rect x="179" y="413" width="4" height="1" fill="#101010"/><rect x="177" y="423" width="6" height="1" fill="#101010"/><text x="0" y="0" transform="translate(176.5 417.4) rotate(-90)" font-family="Liberation Sans" font-size="9.5" font-weight="normal" fill="#000" stroke="#000" stroke-width="0.2" text-anchor="middle">260</text><rect x="179" y="433" width="4" height="1" fill="#101010"/><rect x="170" y="443" width="13" height="1" fill="#101010"/><text x="0" y="0" transform="translate(176.5 437.4) rotate(-90)" font-family="Liberation Sans" font-size="9.5" font-weight="bold" fill="#000" stroke="#000" stroke-width="0.2" text-anchor="middle">250</text><rect x="179" y="453" width="4" height="1" fill="#101010"/><rect x="177" y="463" width="6" height="1" fill="#101010"/><text x="0" y="0" transform="translate(176.5 457.4) rotate(-90)" font-family="Liberation Sans" font-size="9.5" font-weight="normal" fill="#000" stroke="#000" stroke-width="0.2" text-anchor="middle">240</text><rect x="179" y="473" width="4" height="1" fill="#101010"/><rect x="177" y="483" width="6" height="1" fill="#101010"/><text x="0" y="0" transform="translate(176.5 477.4) rotate(-90)" font-family="Liberation Sans" font-size="9.5" font-weight="normal" fill="#000" stroke="#000" stroke-width="0.2" text-anchor="middle">230</text><rect x="179" y="493" width="4" height="1" fill="#101010"/><rect x="177" y="503" width="6" height="1" fill="#101010"/><text x="0" y="0" transform="translate(176.5 497.5) rotate(-90)" font-family="Liberation Sans" font-size="9.5" font-weight="normal" fill="#000" stroke="#000" stroke-width="0.2" text-anchor="middle">220</text><rect x="179" y="513" width="4" height="1" fill="#101010"/><rect x="177" y="523" width="6" height="1" fill="#101010"/><text x="0" y="0" transform="translate(176.5 517.5) rotate(-90)" font-family="Liberation Sans" font-size="9.5" font-weight="normal" fill="#000" stroke="#000" stroke-width="0.2" text-anchor="middle">210</text><rect x="179" y="533" width="4" height="1" fill="#101010"/><rect x="170" y="543" width="13" height="1" fill="#101010"/><text x="0" y="0" transform="translate(176.5 537.5) rotate(-90)" font-family="Liberation Sans" font-size="9.5" font-weight="bold" fill="#000" stroke="#000" stroke-width="0.2" text-anchor="middle">200</text><rect x="179" y="553" width="4" height="1" fill="#101010"/><rect x="177" y="563" width="6" height="1" fill="#101010"/><text x="0" y="0" transform="translate(176.5 557.5) rotate(-90)" font-family="Liberation Sans" font-size="9.5" font-weight="normal" fill="#000" stroke="#000" stroke-width="0.2" text-anchor="middle">190</text><rect x="179" y="573" width="4" height="1" fill="#101010"/><rect x="177" y="583" width="6" height="1" fill="#101010"/><text x="0" y="0" transform="translate(176.5 577.5) rotate(-90)" font-family="Liberation Sans" font-size="9.5" font-weight="normal" fill="#000" stroke="#000" stroke-width="0.2" text-anchor="middle">180</text><rect x="179" y="593" width="4" height="1" fill="#101010"/><rect x="177" y="603" width="6" height="1" fill="#101010"/><text x="0" y="0" transform="translate(176.5 597.6) rotate(-90)" font-family="Liberation Sans" font-size="9.5" font-weight="normal" fill="#000" stroke="#000" stroke-width="0.2" text-anchor="middle">170</text><rect x="179" y="613" width="4" height="1" fill="#101010"/><rect x="177" y="623" width="6" height="1" fill="#101010"/><text x="0" y="0" transform="translate(176.5 617.6) rotate(-90)" font-family="Liberation Sans" font-size="9.5" font-weight="normal" fill="#000" stroke="#000" stroke-width="0.2" text-anchor="middle">160</text><rect x="179" y="633" width="4" height="1" fill="#101010"/><rect x="170" y="643" width="13" height="1" fill="#101010"/><text x="0" y="0" transform="translate(176.5 637.6) rotate(-90)" font-family="Liberation Sans" font-size="9.5" font-weight="bold" fill="#000" stroke="#000" stroke-width="0.2" text-anchor="middle">150</text><rect x="179" y="653" width="4" height="1" fill="#101010"/><rect x="177" y="663" width="6" height="1" fill="#101010"/><text x="0" y="0" transform="translate(176.5 657.6) rotate(-90)" font-family="Liberation Sans" font-size="9.5" font-weight="normal" fill="#000" stroke="#000" stroke-width="0.2" text-anchor="middle">140</text><rect x="179" y="673" width="4" height="1" fill="#101010"/><rect x="177" y="683" width="6" height="1" fill="#101010"/><text x="0" y="0" transform="translate(176.5 677.6) rotate(-90)" font-family="Liberation Sans" font-size="9.5" font-weight="normal" fill="#000" stroke="#000" stroke-width="0.2" text-anchor="middle">130</text><rect x="179" y="693" width="4" height="1" fill="#101010"/><rect x="177" y="703" width="6" height="1" fill="#101010"/><text x="0" y="0" transform="translate(176.5 697.7) rotate(-90)" font-family="Liberation Sans" font-size="9.5" font-weight="normal" fill="#000" stroke="#000" stroke-width="0.2" text-anchor="middle">120</text><rect x="179" y="713" width="4" height="1" fill="#101010"/><rect x="177" y="723" width="6" height="1" fill="#101010"/><text x="0" y="0" transform="translate(176.5 717.7) rotate(-90)" font-family="Liberation Sans" font-size="9.5" font-weight="normal" fill="#000" stroke="#000" stroke-width="0.2" text-anchor="middle">110</text><rect x="179" y="733" width="4" height="1" fill="#101010"/><rect x="170" y="743" width="13" height="1" fill="#101010"/><text x="0" y="0" transform="translate(176.5 737.7) rotate(-90)" font-family="Liberation Sans" font-size="9.5" font-weight="bold" fill="#000" stroke="#000" stroke-width="0.2" text-anchor="middle">100</text><rect x="179" y="753" width="4" height="1" fill="#101010"/><rect x="177" y="763" width="6" height="1" fill="#101010"/><text x="0" y="0" transform="translate(176.5 757.7) rotate(-90)" font-family="Liberation Sans" font-size="9.5" font-weight="normal" fill="#000" stroke="#000" stroke-width="0.2" text-anchor="middle">90</text><rect x="179" y="773" width="4" height="1" fill="#101010"/><rect x="177" y="783" width="6" height="1" fill="#101010"/><text x="0" y="0" transform="translate(176.5 777.7) rotate(-90)" font-family="Liberation Sans" font-size="9.5" font-weight="normal" fill="#000" stroke="#000" stroke-width="0.2" text-anchor="middle">80</text><rect x="179" y="793" width="4" height="1" fill="#101010"/><rect x="177" y="803" width="6" height="1" fill="#101010"/><text x="0" y="0" transform="translate(176.5 797.8) rotate(-90)" font-family="Liberation Sans" font-size="9.5" font-weight="normal" fill="#000" stroke="#000" stroke-width="0.2" text-anchor="middle">70</text><rect x="179" y="813" width="4" height="1" fill="#101010"/><rect x="177" y="823" width="6" height="1" fill="#101010"/><text x="0" y="0" transform="translate(176.5 817.8) rotate(-90)" font-family="Liberation Sans" font-size="9.5" font-weight="normal" fill="#000" stroke="#000" stroke-width="0.2" text-anchor="middle">60</text><rect x="179" y="833" width="4" height="1" fill="#101010"/><rect x="170" y="843" width="13" height="1" fill="#101010"/><text x="0" y="0" transform="translate(176.5 837.8) rotate(-90)" font-family="Liberation Sans" font-size="9.5" font-weight="bold" fill="#000" stroke="#000" stroke-width="0.2" text-anchor="middle">50</text><rect x="179" y="853" width="4" height="1" fill="#101010"/><rect x="177" y="863" width="6" height="1" fill="#101010"/><text x="0" y="0" transform="translate(176.5 857.8) rotate(-90)" font-family="Liberation Sans" font-size="9.5" font-weight="normal" fill="#000" stroke="#000" stroke-width="0.2" text-anchor="middle">40</text><rect x="179" y="873" width="4" height="1" fill="#101010"/><rect x="177" y="883" width="6" height="1" fill="#101010"/><text x="0" y="0" transform="translate(176.5 877.8) rotate(-90)" font-family="Liberation Sans" font-size="9.5" font-weight="normal" fill="#000" stroke="#000" stroke-width="0.2" text-anchor="middle">30</text><rect x="179" y="893" width="4" height="1" fill="#101010"/><rect x="177" y="903" width="6" height="1" fill="#101010"/><text x="0" y="0" transform="translate(176.5 897.9) rotate(-90)" font-family="Liberation Sans" font-size="9.5" font-weight="normal" fill="#000" stroke="#000" stroke-width="0.2" text-anchor="middle">20</text><rect x="179" y="913" width="4" height="1" fill="#101010"/><rect x="177" y="923" width="6" height="1" fill="#101010"/><text x="0" y="0" transform="translate(176.5 917.9) rotate(-90)" font-family="Liberation Sans" font-size="9.5" font-weight="normal" fill="#000" stroke="#000" stroke-width="0.2" text-anchor="middle">10</text><rect x="179" y="933" width="4" height="1" fill="#101010"/></svg>
<div style="position:absolute;left:186px;top:95px;width:1182px;height:807px;background:#000;"></div>
<div style="position:absolute;left:1324px;top:95px;width:1px;height:807px;background:#a8a8a8;"></div>
<div style="position:absolute;left:186px;top:902px;width:1182px;height:36px;background:#f0f0f0;"></div>
<div style="position:absolute;left:203px;top:910px;width:378px;height:2px;background:#8a8a8a;"></div>
<div style="position:absolute;left:186px;top:920px;width:1182px;height:1px;background:#808080;"></div>
<svg style="position:absolute;left:186px;top:922px" width="60" height="14" viewBox="0 0 60 14"><path d="M4 3V11" stroke="#303030" stroke-width="1.3"/><path d="M10 3 L5 7 L10 11Z" fill="#303030"/><path d="M23 3 L18 7 L23 11Z" fill="#303030"/><path d="M35 3 L40 7 L35 11Z" fill="#303030"/><path d="M51 3 L56 7 L51 11Z" fill="#303030"/><path d="M57 3V11" stroke="#303030" stroke-width="1.3"/></svg>
<svg style="position:absolute;left:254px;top:920px" width="670" height="18"><path d="M590.5 0.5 L598.5 16.5 H651.5 L659.5 0.5" fill="#f2f2f2" stroke="#585858" stroke-width="1"/><path d="M503.5 0.5 L511.5 16.5 H589.5 L597.5 0.5" fill="#f2f2f2" stroke="#585858" stroke-width="1"/><path d="M414.5 0.5 L422.5 16.5 H502.5 L510.5 0.5" fill="#f2f2f2" stroke="#585858" stroke-width="1"/><path d="M283.5 0.5 L291.5 16.5 H413.5 L421.5 0.5" fill="#f2f2f2" stroke="#585858" stroke-width="1"/><path d="M198.5 0.5 L206.5 16.5 H282.5 L290.5 0.5" fill="#f2f2f2" stroke="#585858" stroke-width="1"/><path d="M139.5 0.5 L147.5 16.5 H197.5 L205.5 0.5" fill="#f2f2f2" stroke="#585858" stroke-width="1"/><path d="M60.5 0.5 L68.5 16.5 H137.5 L145.5 0.5" fill="#f2f2f2" stroke="#585858" stroke-width="1"/><path d="M0.5 0.5 L8.5 16.5 H59.5 L67.5 0.5" fill="#fbfbfb" stroke="#585858" stroke-width="1"/></svg>
<div style="position:absolute;left:261.5px;top:922.04px;font-size:11px;line-height:12.287px;color:#d01818;font-weight:bold;white-space:nowrap;transform:scaleX(0.9837);transform-origin:0 0;">Knit view</div>
<div style="position:absolute;left:324px;top:922.04px;font-size:11px;line-height:12.287px;color:#181818;white-space:nowrap;transform:scaleX(1.0469);transform-origin:0 0;">Intarsia view</div>
<div style="position:absolute;left:402px;top:922.04px;font-size:11px;line-height:12.287px;color:#e02828;white-space:nowrap;transform:scaleX(0.9774);transform-origin:0 0;">JQD View</div>
<div style="position:absolute;left:464px;top:922.04px;font-size:11px;line-height:12.287px;color:#181818;white-space:nowrap;transform:scaleX(0.9647);transform-origin:0 0;">JQD area map</div>
<div style="position:absolute;left:549px;top:922.04px;font-size:11px;line-height:12.287px;color:#181818;white-space:nowrap;transform:scaleX(1.0331);transform-origin:0 0;">JQD yarn feeder group</div>
<div style="position:absolute;left:679px;top:922.04px;font-size:11px;line-height:12.287px;color:#181818;white-space:nowrap;transform:scaleX(1.0711);transform-origin:0 0;">Stitch drawing</div>
<div style="position:absolute;left:769px;top:922.04px;font-size:11px;line-height:12.287px;color:#181818;white-space:nowrap;transform:scaleX(1.0117);transform-origin:0 0;">AddYarn View</div>
<div style="position:absolute;left:856.7px;top:922.04px;font-size:11px;line-height:12.287px;color:#181818;white-space:nowrap;transform:scaleX(0.9255);transform-origin:0 0;">PAT view</div>
<div style="position:absolute;left:0px;top:939px;width:1368px;height:6px;background:#eef0f8;"></div>
<div style="position:absolute;left:159px;top:937px;width:1209px;height:2px;background:#eef0f8;"></div>
<div style="position:absolute;left:0px;top:945px;width:1368px;height:18px;background:linear-gradient(#c8d3e1,#e0e8f1);"></div>
<div style="position:absolute;left:4.5px;top:948.04px;font-size:11px;line-height:12.287px;color:#202020;white-space:nowrap;transform:scaleX(1.0385);transform-origin:0 0;">Color</div>
<div style="position:absolute;left:0px;top:963px;width:1368px;height:50px;background:#eff1f8;border-top:1px solid #c0c4d0;box-sizing:border-box;"></div>
<div style="position:absolute;left:0px;top:963px;width:1px;height:50px;background:#c0c4d0;"></div>
<svg style="position:absolute;left:0;top:0" width="1368" height="1037"><g transform="translate(107 974)"><rect width="20" height="20" fill="#000000"/></g><text x="117" y="1009" font-family="Liberation Sans" font-size="11" text-anchor="middle" fill="#202020">0</text><rect x="133.5" y="968.5" width="31" height="31" fill="#cce4f7" stroke="#3d80b2"/><g transform="translate(139 974)"><rect width="20" height="20" fill="#800000"/><path d="M3 5H17M10 5V8" stroke="#f4c0c0" stroke-width="2"/><path d="M8.237 8.2 H11.763 L14.3 10.737 V14.263 L11.763 16.8 H8.237 L5.7 14.263 V10.737Z" fill="none" stroke="#f4c0c0" stroke-width="2"/></g><text x="149" y="1009" font-family="Liberation Sans" font-size="11" text-anchor="middle" fill="#202020">1</text><g transform="translate(171 974)"><rect width="20" height="20" fill="#008000"/><path d="M8.36 3.5 H11.64 L14 5.86 V9.14 L11.64 11.5 H8.36 L6 9.14 V5.86Z" fill="none" stroke="#c8f4c8" stroke-width="2"/><path d="M2 14H18" stroke="#c8f4c8" stroke-width="2"/></g><text x="181" y="1009" font-family="Liberation Sans" font-size="11" text-anchor="middle" fill="#202020">2</text><g transform="translate(203 974)"><rect width="20" height="20" fill="#808000"/><path d="M10.524000000000001 2.4 H13.475999999999999 L15.6 4.524 V7.476 L13.475999999999999 9.6 H10.524000000000001 L8.4 7.476 V4.524Z" fill="none" stroke="#e8e4a8" stroke-width="1.8"/><path d="M6.524 10.4 H9.475999999999999 L11.6 12.524000000000001 V15.475999999999999 L9.475999999999999 17.6 H6.524 L4.4 15.475999999999999 V12.524000000000001Z" fill="none" stroke="#e8e4a8" stroke-width="1.8"/><path d="M2 10H18" stroke="#e8e4a8" stroke-width="1.6"/></g><text x="213" y="1009" font-family="Liberation Sans" font-size="11" text-anchor="middle" fill="#202020">3</text><g transform="translate(235 974)"><rect width="20" height="20" fill="#000080"/><path d="M2 6H6 L10 15 L14 6 H18" stroke="#d0d0f8" stroke-width="2.2" fill="none"/></g><text x="245" y="1009" font-family="Liberation Sans" font-size="11" text-anchor="middle" fill="#202020">4</text><g transform="translate(267 974)"><rect width="20" height="20" fill="#800080"/><path d="M2 14H6 L10 5 L14 14 H18" stroke="#f4b0f4" stroke-width="2.2" fill="none"/></g><text x="277" y="1009" font-family="Liberation Sans" font-size="11" text-anchor="middle" fill="#202020">5</text><g transform="translate(299 974)"><rect width="20" height="20" fill="#008080"/><path d="M2 10H9 L13 4 L16 10 H18" stroke="#b0ecec" stroke-width="2" fill="none"/><path d="M5.688 11.3 H8.312 L10.2 13.188 V15.812 L8.312 17.7 H5.688 L3.8 15.812 V13.188Z" fill="none" stroke="#b0ecec" stroke-width="1.8"/></g><text x="309" y="1009" font-family="Liberation Sans" font-size="11" text-anchor="middle" fill="#202020">6</text><g transform="translate(331 974)"><rect width="20" height="20" fill="#c0c0c0"/><path d="M2 9H4 L7 16 L11 9 H18" stroke="#282828" stroke-width="2.2" fill="none"/><path d="M12.77 2 H15.23 L17 3.77 V6.23 L15.23 8 H12.77 L11 6.23 V3.77Z" fill="none" stroke="#282828" stroke-width="1.8"/></g><text x="341" y="1009" font-family="Liberation Sans" font-size="11" text-anchor="middle" fill="#202020">7</text><g transform="translate(363 974)"><rect width="20" height="20" fill="#c0dcc0"/><path d="M8.442 10.7 H11.558 L13.8 12.942 V16.058 L11.558 18.3 H8.442 L6.2 16.058 V12.942Z" fill="none" stroke="#282828" stroke-width="2"/><path d="M2 8H18M10 8V2M7.5 4.5 L10 2 L12.5 4.5M14 1L18 5M18 1L14 5" stroke="#282828" stroke-width="1.6" fill="none"/></g><text x="373" y="1009" font-family="Liberation Sans" font-size="11" text-anchor="middle" fill="#202020">8</text><g transform="translate(395 974)"><rect width="20" height="20" fill="#a6caf0"/><path d="M8.524000000000001 1.9 H11.475999999999999 L13.6 4.024 V6.976 L11.475999999999999 9.1 H8.524000000000001 L6.4 6.976 V4.024Z" fill="none" stroke="#282828" stroke-width="2"/><path d="M2 11H18M10 11V18M7.5 15.5 L10 18 L12.5 15.5M14 14L18 18M18 14L14 18" stroke="#282828" stroke-width="1.6" fill="none"/></g><text x="405" y="1009" font-family="Liberation Sans" font-size="11" text-anchor="middle" fill="#202020">9</text><g transform="translate(427 974)"><rect width="20" height="20" fill="#e01818"/><path d="M11.065 2.5 H13.935 L16.0 4.565 V7.435 L13.935 9.5 H11.065 L9.0 7.435 V4.565Z" fill="none" stroke="#fce0e0" stroke-width="1.8"/><path d="M6.565 10.5 H9.435 L11.5 12.565 V15.435 L9.435 17.5 H6.565 L4.5 15.435 V12.565Z" fill="none" stroke="#fce0e0" stroke-width="1.8"/><path d="M2 10H18" stroke="#fce0e0" stroke-width="1.6"/></g><text x="437" y="1009" font-family="Liberation Sans" font-size="11" text-anchor="middle" fill="#202020">10</text><g transform="translate(459 974)"><rect width="20" height="20" fill="#e8e020"/><path d="M4 3 Q10 1 16 3" stroke="#303010" fill="none" stroke-width="1.5"/><path d="M8.77 4 H11.23 L13 5.77 V8.23 L11.23 10 H8.77 L7 8.23 V5.77Z" fill="none" stroke="#303010" stroke-width="1.6"/><text x="10" y="19" font-family="Liberation Sans" font-size="7" font-weight="bold" text-anchor="middle" fill="#303010">F-2ND</text></g><text x="469" y="1009" font-family="Liberation Sans" font-size="11" text-anchor="middle" fill="#202020">11</text><g transform="translate(491 974)"><rect width="20" height="20" fill="#20d8e0"/><path d="M8.77 2.5 H11.23 L13 4.27 V6.73 L11.23 8.5 H8.77 L7 6.73 V4.27Z" fill="none" stroke="#184848" stroke-width="1.6"/><path d="M3 9H17" stroke="#184848" stroke-width="1.5"/><text x="10" y="19" font-family="Liberation Sans" font-size="7" font-weight="bold" text-anchor="middle" fill="#184848">B-2ND</text></g><text x="501" y="1009" font-family="Liberation Sans" font-size="11" text-anchor="middle" fill="#202020">12</text><g transform="translate(523 974)"><rect width="20" height="20" fill="#20c820"/><path d="M5.934 5.4 H8.066 L9.6 6.934 V9.066 L8.066 10.6 H5.934 L4.4 9.066 V6.934Z" fill="none" stroke="#0c3a0c" stroke-width="1.5"/><path d="M12.934 2.4 H15.066 L16.6 3.934 V6.066 L15.066 7.6 H12.934 L11.4 6.066 V3.934Z" fill="none" stroke="#0c3a0c" stroke-width="1.5"/><path d="M2 10H18" stroke="#0c3a0c" stroke-width="1.3"/><text x="10" y="19" font-family="Liberation Sans" font-size="6.5" font-weight="bold" text-anchor="middle" fill="#0c3a0c">FB2ND</text></g><text x="533" y="1009" font-family="Liberation Sans" font-size="11" text-anchor="middle" fill="#202020">13</text><g transform="translate(555 974)"><rect width="20" height="20" fill="#c8c820"/><path d="M2 11 L6 15 L11 5 L15 12 L18 10" stroke="#282808" stroke-width="2.2" fill="none"/></g><text x="565" y="1009" font-family="Liberation Sans" font-size="11" text-anchor="middle" fill="#202020">14</text><g transform="translate(587 974)"><rect width="20" height="20" fill="#20b8b8"/><path d="M2 7H18" stroke="#0c3a3a" stroke-width="2"/><path d="M8.36 9 H11.64 L14 11.36 V14.64 L11.64 17 H8.36 L6 14.64 V11.36Z" fill="none" stroke="#0c3a3a" stroke-width="2"/><path d="M15 15L18 18M18 15L15 18" stroke="#0c3a3a" stroke-width="1.2"/></g><text x="597" y="1009" font-family="Liberation Sans" font-size="11" text-anchor="middle" fill="#202020">15</text><g transform="translate(619 974)"><rect width="20" height="20" fill="#0808c8"/><path d="M4 4 L16 16M16 4 L4 16" stroke="#f0f0ff" stroke-width="2.4"/></g><text x="629" y="1009" font-family="Liberation Sans" font-size="11" text-anchor="middle" fill="#202020">16</text><g transform="translate(651 974)"><rect width="20" height="20" fill="#a8a020"/><path d="M7.565 2.0 H10.435 L12.5 4.065 V6.935 L10.435 9.0 H7.565 L5.5 6.935 V4.065Z" fill="none" stroke="#ece4a8" stroke-width="1.8"/><path d="M2 10H18" stroke="#ece4a8" stroke-width="1.6"/><path d="M15 2L17 4M17 2L15 4" stroke="#ece4a8"/></g><text x="661" y="1009" font-family="Liberation Sans" font-size="11" text-anchor="middle" fill="#202020">17</text><g transform="translate(683 974)"><rect width="20" height="20" fill="#10a0a8"/><path d="M10 3V18M7 5 L10 3 L13 5M6 8H14M6 11 L10 9 L14 11M6 14 L10 12 L14 14" stroke="#f0fcfc" stroke-width="1.6" fill="none"/><path d="M1.5 2H3M17 2H18.5M1.5 18H3M17 18H18.5M1.5 10H3M17 10H18.5M1.5 6H3M17 14H18.5" stroke="#f0fcfc" stroke-width="1.3"/></g><text x="693" y="1009" font-family="Liberation Sans" font-size="11" text-anchor="middle" fill="#202020">18</text><g transform="translate(715 974)"><rect width="20" height="20" fill="#a010a8"/><path d="M10 3V18M7 5 L10 3 L13 5M6 8H14M6 11 L10 9 L14 11M6 14 L10 12 L14 14" stroke="#fcf0fc" stroke-width="1.6" fill="none"/><path d="M1.5 2H3M17 2H18.5M1.5 18H3M17 18H18.5M1.5 10H3M17 10H18.5M1.5 6H3M17 14H18.5" stroke="#fcf0fc" stroke-width="1.3"/></g><text x="725" y="1009" font-family="Liberation Sans" font-size="11" text-anchor="middle" fill="#202020">19</text><g transform="translate(747 974)"><rect width="20" height="20" fill="#a00818"/><path d="M2 5H8M5 5V7" stroke="#fff" stroke-width="1.6"/><path d="M3.934 7.4 H6.066 L7.6 8.934 V11.066 L6.066 12.6 H3.934 L2.4 11.066 V8.934Z" fill="none" stroke="#fff" stroke-width="1.6"/><path d="M9 9H11M15 17V4M12 7 L15 4 L18 7" fill="none" stroke="#fff" stroke-width="2"/></g><text x="757" y="1009" font-family="Liberation Sans" font-size="11" text-anchor="middle" fill="#202020">20</text><g transform="translate(779 974)"><rect width="20" height="20" fill="#e0a818"/><path d="M15 12 L5 2M5 2V8M5 2H11" stroke="#282808" stroke-width="2.2" fill="none"/><text x="10" y="19.5" font-family="Liberation Sans" font-size="8" text-anchor="middle" fill="#282808">1P</text></g><text x="789" y="1009" font-family="Liberation Sans" font-size="11" text-anchor="middle" fill="#202020">21</text><g transform="translate(811 974)"><rect width="20" height="20" fill="#20c8a0"/><path d="M15 12 L5 2M5 2V8M5 2H11" stroke="#0c3828" stroke-width="2.2" fill="none"/><text x="10" y="19.5" font-family="Liberation Sans" font-size="8" text-anchor="middle" fill="#0c3828">2P</text></g><text x="821" y="1009" font-family="Liberation Sans" font-size="11" text-anchor="middle" fill="#202020">22</text><g transform="translate(843 974)"><rect width="20" height="20" fill="#a020d8"/><path d="M15 12 L5 2M5 2V8M5 2H11" stroke="#f4d8fc" stroke-width="2.2" fill="none"/><text x="10" y="19.5" font-family="Liberation Sans" font-size="8" text-anchor="middle" fill="#f4d8fc">3P</text></g><text x="853" y="1009" font-family="Liberation Sans" font-size="11" text-anchor="middle" fill="#202020">23</text><g transform="translate(875 974)"><rect width="20" height="20" fill="#98c8a8"/><path d="M15 12 L5 2M5 2V8M5 2H11" stroke="#182818" stroke-width="2.2" fill="none"/><text x="10" y="19.5" font-family="Liberation Sans" font-size="8" text-anchor="middle" fill="#182818">4P</text></g><text x="885" y="1009" font-family="Liberation Sans" font-size="11" text-anchor="middle" fill="#202020">24</text><g transform="translate(907 974)"><rect width="20" height="20" fill="#0808c8"/><path d="M15 12 L5 2M5 2V8M5 2H11" stroke="#e8ecff" stroke-width="2.2" fill="none"/><text x="10" y="19.5" font-family="Liberation Sans" font-size="8" text-anchor="middle" fill="#e8ecff">5P</text></g><text x="917" y="1009" font-family="Liberation Sans" font-size="11" text-anchor="middle" fill="#202020">25</text><g transform="translate(939 974)"><rect width="20" height="20" fill="#404840"/><path d="M15 12 L5 2M5 2V8M5 2H11" stroke="#c8d0c8" stroke-width="2.2" fill="none"/><text x="10" y="19.5" font-family="Liberation Sans" font-size="8" text-anchor="middle" fill="#c8d0c8">6P</text></g><text x="949" y="1009" font-family="Liberation Sans" font-size="11" text-anchor="middle" fill="#202020">26</text><g transform="translate(971 974)"><rect width="20" height="20" fill="#d01010"/><path d="M15 12 L5 2M5 2V8M5 2H11" stroke="#fcd8d8" stroke-width="2.2" fill="none"/><text x="10" y="19.5" font-family="Liberation Sans" font-size="8" text-anchor="middle" fill="#fcd8d8">7P</text></g><text x="981" y="1009" font-family="Liberation Sans" font-size="11" text-anchor="middle" fill="#202020">27</text><g transform="translate(1003 974)"><rect width="20" height="20" fill="#20c020"/><path d="M3 3 L17 17" stroke="#e0fce0" stroke-width="2"/><path d="M11 4H13M15 7H17M4 12H6M7 15H9M12 10H14" stroke="#e0fce0" stroke-width="1.6"/></g><text x="1013" y="1009" font-family="Liberation Sans" font-size="11" text-anchor="middle" fill="#202020">28</text><g transform="translate(1035 974)"><rect width="20" height="20" fill="#c06050"/><path d="M17 3 L3 17" stroke="#f4dcd4" stroke-width="2"/><path d="M4 4H6M7 7H9M12 13H14M15 16H17M6 12H8" stroke="#f4dcd4" stroke-width="1.6"/></g><text x="1045" y="1009" font-family="Liberation Sans" font-size="11" text-anchor="middle" fill="#202020">29</text><g transform="translate(1067 974)"><rect width="20" height="20" fill="#0818d0"/><path d="M2 5H8M5 5V7" stroke="#fff" stroke-width="1.6"/><path d="M3.934 7.4 H6.066 L7.6 8.934 V11.066 L6.066 12.6 H3.934 L2.4 11.066 V8.934Z" fill="none" stroke="#fff" stroke-width="1.6"/><path d="M9 9H11M15 3V16M12 13 L15 16 L18 13" fill="none" stroke="#fff" stroke-width="2"/></g><text x="1077" y="1009" font-family="Liberation Sans" font-size="11" text-anchor="middle" fill="#202020">30</text><g transform="translate(1099 974)"><rect width="20" height="20" fill="#c8a818"/><path d="M5 12 L15 2M15 2V8M15 2H9" stroke="#282808" stroke-width="2.2" fill="none"/><text x="10" y="19.5" font-family="Liberation Sans" font-size="8" text-anchor="middle" fill="#282808">1P</text></g><text x="1109" y="1009" font-family="Liberation Sans" font-size="11" text-anchor="middle" fill="#202020">31</text><g transform="translate(1131 974)"><rect width="20" height="20" fill="#20c0a0"/><path d="M5 12 L15 2M15 2V8M15 2H9" stroke="#0c3828" stroke-width="2.2" fill="none"/><text x="10" y="19.5" font-family="Liberation Sans" font-size="8" text-anchor="middle" fill="#0c3828">2P</text></g><text x="1141" y="1009" font-family="Liberation Sans" font-size="11" text-anchor="middle" fill="#202020">32</text><g transform="translate(1163 974)"><rect width="20" height="20" fill="#a018d0"/><path d="M5 12 L15 2M15 2V8M15 2H9" stroke="#f4d8fc" stroke-width="2.2" fill="none"/><text x="10" y="19.5" font-family="Liberation Sans" font-size="8" text-anchor="middle" fill="#f4d8fc">3P</text></g><text x="1173" y="1009" font-family="Liberation Sans" font-size="11" text-anchor="middle" fill="#202020">33</text><g transform="translate(1195 974)"><rect width="20" height="20" fill="#185818"/><path d="M5 12 L15 2M15 2V8M15 2H9" stroke="#d8f4d8" stroke-width="2.2" fill="none"/><text x="10" y="19.5" font-family="Liberation Sans" font-size="8" text-anchor="middle" fill="#d8f4d8">4P</text></g><text x="1205" y="1009" font-family="Liberation Sans" font-size="11" text-anchor="middle" fill="#202020">34</text><g transform="translate(1227 974)"><rect width="20" height="20" fill="#6878e0"/><path d="M5 12 L15 2M15 2V8M15 2H9" stroke="#eeeeff" stroke-width="2.2" fill="none"/><text x="10" y="19.5" font-family="Liberation Sans" font-size="8" text-anchor="middle" fill="#eeeeff">5P</text></g><text x="1237" y="1009" font-family="Liberation Sans" font-size="11" text-anchor="middle" fill="#202020">35</text><g transform="translate(1259 974)"><rect width="20" height="20" fill="#c88818"/><path d="M5 12 L15 2M15 2V8M15 2H9" stroke="#f4e4c4" stroke-width="2.2" fill="none"/><text x="10" y="19.5" font-family="Liberation Sans" font-size="8" text-anchor="middle" fill="#f4e4c4">6P</text></g><text x="1269" y="1009" font-family="Liberation Sans" font-size="11" text-anchor="middle" fill="#202020">36</text><g transform="translate(1291 974)"><rect width="20" height="20" fill="#f08888"/><path d="M5 12 L15 2M15 2V8M15 2H9" stroke="#402020" stroke-width="2.2" fill="none"/><text x="10" y="19.5" font-family="Liberation Sans" font-size="8" text-anchor="middle" fill="#402020">7P</text></g><text x="1301" y="1009" font-family="Liberation Sans" font-size="11" text-anchor="middle" fill="#202020">37</text><g transform="translate(1323 974)"><rect width="20" height="20" fill="#989898"/><path d="M5 5 L15 15M15 5 L5 15" stroke="#282828" stroke-width="1.8" stroke-dasharray="2 1"/></g><text x="1333" y="1009" font-family="Liberation Sans" font-size="11" text-anchor="middle" fill="#202020">38</text><g transform="translate(1355 974)"><rect width="20" height="20" fill="#b0b888"/><path d="M4 11 L9 6 L13 12 L17 4M8 16 L12 9M3 3 L6 6" stroke="#282818" stroke-width="2" fill="none"/></g><text x="1365" y="1009" font-family="Liberation Sans" font-size="11" text-anchor="middle" fill="#202020">39</text><rect x="6.5" y="968.5" width="31" height="31" fill="#cce4f7" stroke="#3d80b2"/><g transform="translate(12 974)"><rect width="20" height="20" fill="#800000"/><path d="M3 5H17M10 5V8" stroke="#f0b8b8" stroke-width="2"/><path d="M8.237 8.2 H11.763 L14.3 10.737 V14.263 L11.763 16.8 H8.237 L5.7 14.263 V10.737Z" fill="none" stroke="#f0b8b8" stroke-width="2"/></g><text x="22" y="1009" font-family="Liberation Sans" font-size="11" text-anchor="middle" fill="#202020">1</text><rect x="38" y="969" width="13" height="30" fill="#ebebeb"/><path d="M41.5 979 L44.5 975 L47.5 979Z M41.5 989 L44.5 993 L47.5 989Z" fill="#101010"/><rect x="68.5" y="969.5" width="13" height="29" fill="#f8f8f8" stroke="#c8c8c8"/><rect x="82.5" y="969.5" width="13" height="29" fill="#f8f8f8" stroke="#c8c8c8"/><path d="M76 981 L73 984 L76 987Z M88 981 L91 984 L88 987Z" fill="#202020"/></svg>
<div style="position:absolute;left:0px;top:1013px;width:1368px;height:19px;background:#f0f0f0;border-top:1px solid #d8d8dc;box-sizing:border-box;"></div>
<div style="position:absolute;left:0px;top:1031px;width:1368px;height:6px;background:#dcdce8;"></div>
<div style="position:absolute;left:247px;top:1015px;width:1px;height:16px;background:#c8c8cc;"></div>
<div style="position:absolute;left:317px;top:1015px;width:1px;height:16px;background:#c8c8cc;"></div>
<div style="position:absolute;left:563px;top:1015px;width:1px;height:16px;background:#c8c8cc;"></div>
<div style="position:absolute;left:645px;top:1015px;width:1px;height:16px;background:#c8c8cc;"></div>
<div style="position:absolute;left:1131px;top:1015px;width:1px;height:16px;background:#c8c8cc;"></div>
<div style="position:absolute;left:6px;top:1018.04px;font-size:11px;line-height:12.287px;color:#202020;white-space:nowrap;transform:scaleX(0.9905);transform-origin:0 0;">Type of machine: H3-5(14)</div>
<div style="position:absolute;left:252px;top:1018.04px;font-size:11px;line-height:12.287px;color:#202020;white-space:nowrap;transform:scaleX(0.9085);transform-origin:0 0;">2 X</div>
<div style="position:absolute;left:322px;top:1018.04px;font-size:11px;line-height:12.287px;color:#202020;white-space:nowrap;transform:scaleX(0.9750);transform-origin:0 0;">Canvas: 2048, 2048</div>
<div style="position:absolute;left:568px;top:1018.04px;font-size:11px;line-height:12.287px;color:#202020;white-space:nowrap;transform:scaleX(1.0474);transform-origin:0 0;">Color number:</div>
<div style="position:absolute;left:650px;top:1018.04px;font-size:11px;line-height:12.287px;color:#202020;white-space:nowrap;transform:scaleX(0.9887);transform-origin:0 0;">(Col, Row): (570, 20)0: Neutral (miss)</div>
<div style="position:absolute;left:1136.5px;top:1018.04px;font-size:11px;line-height:12.287px;color:#202020;white-space:nowrap;transform:scaleX(1.0500);transform-origin:0 0;">(Width, Height): 0, 0</div>
<svg style="position:absolute;left:186px;top:95px" width="1182" height="807" viewBox="186 95 1182 807"><defs>
<pattern id="pchk" width="4" height="4" patternUnits="userSpaceOnUse"><rect width="4" height="4" fill="#b8e86c"/><rect x="2" y="0" width="2" height="2" fill="#1a5606"/><rect x="0" y="2" width="2" height="2" fill="#1a5606"/></pattern>
<pattern id="ptex" width="8" height="12" patternUnits="userSpaceOnUse"><rect width="8" height="12" fill="#96cc94"/>
<rect x="4" y="2" width="4" height="2" fill="#8a4414"/><rect x="4" y="4" width="4" height="1.5" fill="#e4b888"/><rect x="4" y="6" width="4" height="2" fill="#10383c"/>
<rect x="0" y="8" width="4" height="2" fill="#8a4414"/><rect x="0" y="10" width="4" height="1.5" fill="#e4b888"/><rect x="0" y="0" width="4" height="2" fill="#10383c"/></pattern>
<pattern id="ptex2" width="8" height="12" patternUnits="userSpaceOnUse"><rect width="8" height="12" fill="#96cc94"/>
<rect x="0" y="2" width="4" height="2" fill="#8a4414"/><rect x="0" y="4" width="4" height="1.5" fill="#e4b888"/><rect x="0" y="6" width="4" height="2" fill="#10383c"/>
<rect x="4" y="8" width="4" height="2" fill="#8a4414"/><rect x="4" y="10" width="4" height="1.5" fill="#e4b888"/><rect x="4" y="0" width="4" height="2" fill="#10383c"/></pattern>
<pattern id="plb" width="4" height="4" patternUnits="userSpaceOnUse"><rect width="4" height="4" fill="#bcd8dc"/><rect width="2" height="2" fill="#c4dee0"/><rect x="2" y="2" width="2" height="2" fill="#c4dee0"/></pattern>
<pattern id="pbk" width="4" height="4" patternUnits="userSpaceOnUse"><rect width="4" height="4" fill="#c0dcc0"/><rect x="0" y="1" width="2" height="2" fill="#103810"/><rect x="2" y="3" width="2" height="2" fill="#103810"/><rect x="2" y="-1" width="2" height="2" fill="#103810"/></pattern>
<g id="half">
  <!-- texture region -->
  <path d="M490 405 L601 453 L601 560 L592 600 L588 667 L529 700 L510 700 L490 700Z" fill="url(#ptex)"/>
  <!-- arch + lines -->
  <path d="M612 213 C572 220 527 245 525 300 L524 335 L522 560 M526 335 C540 400 560 460 565 510 C570 560 568 610 530 662 M522 446 L602 477 M524 506 L602 526 M522 556 L600 570" fill="none" stroke="#5c5a44" stroke-width="11"/>
</g>
<g id="halfR">
  <path d="M490 405 L601 453 L601 560 L592 600 L588 667 L529 700 L510 700 L490 700Z" fill="url(#ptex)"/>
  <path d="M612 213 C572 220 527 245 525 300 L524 335 L522 560 M526 335 C540 400 560 460 565 510 C570 560 568 610 530 662 M522 456 L602 480 M524 506 L602 526 M522 556 L602 564" fill="none" stroke="#5c5a44" stroke-width="11"/>
</g>
</defs><path d="M490 201 H806 V302 L756 876 H540 L490 302Z" fill="#22b848"/><path d="M496 201 H800 V302 L751 876 H545 L496 302Z" fill="#2040e0"/><clipPath id="cbody"><path d="M490 201 H806 V302 L756 876 H540 L490 302Z"/></clipPath><g clip-path="url(#cbody)"><use href="#half"/><use href="#halfR" transform="translate(1296 0) scale(-1 1)"/></g><path d="M606 201 L606 288 C604 300 586 325 584 350 C584 380 600 420 601 445 L601 560 C596 575 592 590 590 620 C589 650 588 660 588 667 C589 720 600 770 632 795 L664 795 C696 770 707 720 708 667 C708 660 707 650 706 620 C704 590 700 575 695 560 L695 445 C696 420 712 380 712 350 C710 325 692 300 690 288 L690 201Z" fill="url(#pchk)"/><path d="M595 613 L600 650 L611 700 L622 745 L630 768 L636 775 L660 775 L666 768 L674 745 L685 700 L696 650 L701 613 L696 613 L688 650 L676 670 L664 680 L656 683 L640 683 L632 680 L620 670 L608 650 L600 613Z" fill="url(#ptex2)"/><path d="M640 201 H658 L656 222 L653 250 L653 274 C664 296 676 320 676 350 C676 380 664 400 649 418 C634 400 622 380 622 350 C622 320 634 296 645 274 L645 250 L642 222Z" fill="#1a6a0a"/><rect x="647" y="414" width="3" height="72" fill="#1a6a0a"/><path d="M649 483 Q652 520 658 545 Q666 580 666 610 Q666 633 649 633 Q632 633 632 610 Q632 580 640 545 Q646 520 649 483Z" fill="#1a6a0a"/><rect x="648" y="222" width="2" height="193" fill="#5a6a38"/><rect x="632" y="339" width="34" height="2" fill="#4a6a30"/><rect x="648" y="515" width="2" height="102" fill="#5a6a38"/><path d="M490 201 H496 V302 L545 876 H540 L490 302Z" fill="#22b848"/><path d="M806 201 H800 V302 L751 876 H756 L806 302Z" fill="#22b848"/><rect x="540" y="121" width="216" height="38" fill="url(#plb)"/><rect x="490" y="159" width="316" height="10" fill="#000"/><rect x="490" y="159" width="50" height="4" fill="#d81818"/><rect x="490" y="163" width="266" height="2" fill="#f4ecec"/><rect x="756" y="165" width="50" height="4" fill="#d81818"/><rect x="490" y="169" width="316" height="32" fill="url(#plb)"/><rect x="490" y="169" width="50" height="12" fill="#c4dcc0"/><rect x="490" y="181" width="50" height="4" fill="url(#pbk)"/><rect x="756" y="169" width="50" height="12" fill="#c4dcc0"/><rect x="756" y="181" width="50" height="4" fill="url(#pbk)"/><rect x="540" y="876" width="216" height="6" fill="#bcd8e0"/><rect x="540" y="882" width="216" height="1.5" fill="#f0c8b0"/><rect x="540" y="883.5" width="216" height="1.5" fill="#902000"/><rect x="540" y="885" width="216" height="1.5" fill="#d08020"/><rect x="540" y="886.5" width="216" height="2.5" fill="#a0a020"/><rect x="540" y="889" width="216" height="10" fill="#c0dcc0"/><rect x="540" y="899" width="216" height="3" fill="url(#pbk)"/></svg>
</body></html>
